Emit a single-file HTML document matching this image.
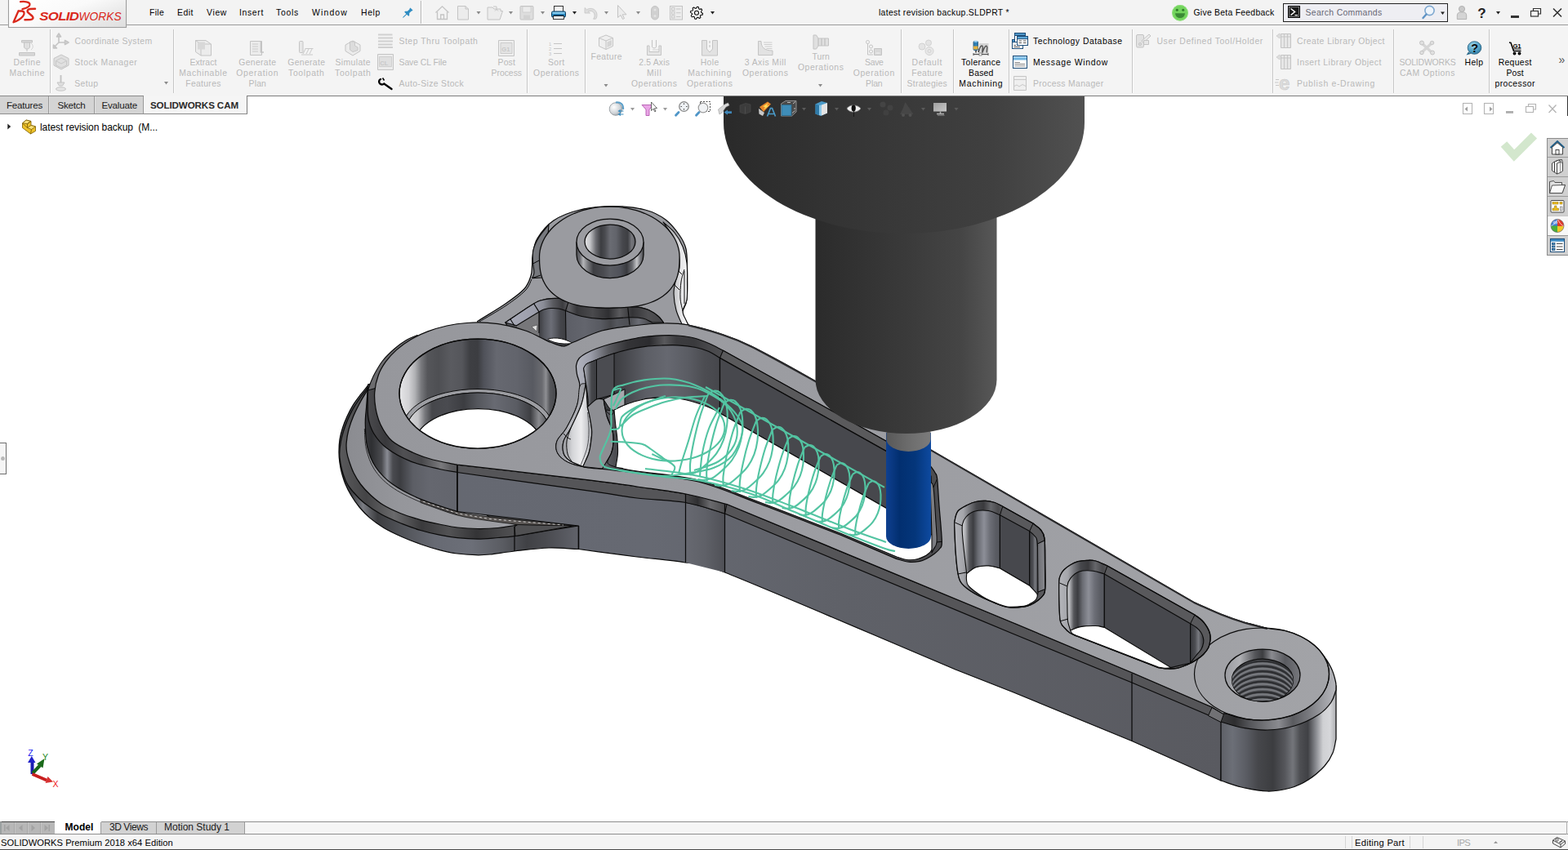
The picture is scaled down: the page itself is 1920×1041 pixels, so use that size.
<!DOCTYPE html>
<html lang="en"><head><meta charset="utf-8"><title>SOLIDWORKS Premium 2018 x64 Edition - latest revision backup.SLDPRT</title>
<style>
html,body{margin:0;padding:0;}
body{width:1920px;height:1041px;overflow:hidden;background:#fff;position:relative;font-family:"Liberation Sans",sans-serif;}
.t{position:absolute;white-space:pre;line-height:16px;height:16px;}
.r{position:absolute;}
svg{position:absolute;left:0;top:0;}
svg text{font-family:"Liberation Sans",sans-serif;}
</style></head><body>
<div id="app" style="position:absolute;left:0;top:0;width:1920px;height:1041px;overflow:hidden;">
<svg width="1920" height="1041" viewBox="0 0 1920 1041">
<defs><linearGradient id="gFlSide" x1="415" y1="0" x2="710" y2="0" gradientUnits="userSpaceOnUse"><stop offset="0" stop-color="#4a4b50"/><stop offset="0.05" stop-color="#3a3b3f"/><stop offset="0.1" stop-color="#7a7c82"/><stop offset="0.16" stop-color="#3c3d40"/><stop offset="0.25" stop-color="#4f5156"/><stop offset="0.4" stop-color="#676a73"/><stop offset="0.55" stop-color="#6c6f78"/><stop offset="0.68" stop-color="#5a5c62"/><stop offset="0.78" stop-color="#404145"/><stop offset="0.86" stop-color="#4a4b50"/><stop offset="1" stop-color="#62646c"/></linearGradient><linearGradient id="gFlCh" x1="415" y1="0" x2="640" y2="0" gradientUnits="userSpaceOnUse"><stop offset="0" stop-color="#5a5a5c"/><stop offset="0.15" stop-color="#444446"/><stop offset="0.3" stop-color="#6a6a6c"/><stop offset="0.45" stop-color="#3a3a3c"/><stop offset="0.6" stop-color="#525254"/><stop offset="0.75" stop-color="#343436"/><stop offset="0.9" stop-color="#4a4a4c"/><stop offset="1" stop-color="#555557"/></linearGradient><linearGradient id="gFlTop" x1="420" y1="0" x2="650" y2="0" gradientUnits="userSpaceOnUse"><stop offset="0" stop-color="#8a8b90"/><stop offset="0.3" stop-color="#95969b"/><stop offset="1" stop-color="#9fa0a5"/></linearGradient><linearGradient id="gHubWall" x1="447" y1="0" x2="560" y2="0" gradientUnits="userSpaceOnUse"><stop offset="0" stop-color="#3a3b3f"/><stop offset="0.07" stop-color="#2e2f32"/><stop offset="0.18" stop-color="#4a4b4f"/><stop offset="0.24" stop-color="#8a8c94"/><stop offset="0.3" stop-color="#4a4b50"/><stop offset="0.38" stop-color="#3c3d41"/><stop offset="0.52" stop-color="#5c5e65"/><stop offset="0.7" stop-color="#65676f"/><stop offset="1" stop-color="#63656d"/></linearGradient><linearGradient id="gHubCh" x1="450" y1="0" x2="560" y2="0" gradientUnits="userSpaceOnUse"><stop offset="0" stop-color="#4a4a4d"/><stop offset="0.2" stop-color="#39393c"/><stop offset="0.4" stop-color="#505053"/><stop offset="0.6" stop-color="#48484b"/><stop offset="0.82" stop-color="#7a7a7d"/><stop offset="0.92" stop-color="#606063"/><stop offset="1" stop-color="#555558"/></linearGradient><linearGradient id="gTop" x1="450" y1="0" x2="1640" y2="0" gradientUnits="userSpaceOnUse"><stop offset="0" stop-color="#96979c"/><stop offset="0.5" stop-color="#9c9da2"/><stop offset="1" stop-color="#a2a3a7"/></linearGradient><linearGradient id="gFront" x1="560" y1="0" x2="1500" y2="0" gradientUnits="userSpaceOnUse"><stop offset="0" stop-color="#656871"/><stop offset="0.25" stop-color="#666972"/><stop offset="0.5" stop-color="#5f6168"/><stop offset="1" stop-color="#595a60"/></linearGradient><linearGradient id="gHole" x1="489" y1="0" x2="681" y2="0" gradientUnits="userSpaceOnUse"><stop offset="0" stop-color="#e6e6e8"/><stop offset="0.06" stop-color="#d2d2d5"/><stop offset="0.1" stop-color="#b0b1b4"/><stop offset="0.14" stop-color="#77787c"/><stop offset="0.18" stop-color="#55565a"/><stop offset="0.25" stop-color="#4e4f53"/><stop offset="0.33" stop-color="#5a5b60"/><stop offset="0.4" stop-color="#55565b"/><stop offset="0.45" stop-color="#3e3f43"/><stop offset="0.5" stop-color="#3c3d41"/><stop offset="0.54" stop-color="#50525a"/><stop offset="0.62" stop-color="#666870"/><stop offset="0.75" stop-color="#62646c"/><stop offset="0.85" stop-color="#585a61"/><stop offset="0.91" stop-color="#6a6b70"/><stop offset="0.935" stop-color="#8d8e92"/><stop offset="0.96" stop-color="#55565a"/><stop offset="1" stop-color="#46474b"/></linearGradient><linearGradient id="gEnd" x1="1495" y1="0" x2="1637" y2="0" gradientUnits="userSpaceOnUse"><stop offset="0" stop-color="#5e6067"/><stop offset="0.1" stop-color="#6c6f77"/><stop offset="0.22" stop-color="#5a5c63"/><stop offset="0.32" stop-color="#46474b"/><stop offset="0.45" stop-color="#3c3d40"/><stop offset="0.55" stop-color="#55565b"/><stop offset="0.62" stop-color="#74767b"/><stop offset="0.68" stop-color="#4e4f53"/><stop offset="0.75" stop-color="#404145"/><stop offset="0.82" stop-color="#8a8c91"/><stop offset="0.88" stop-color="#cfd0d3"/><stop offset="0.94" stop-color="#d6d7da"/><stop offset="1" stop-color="#a9aaad"/></linearGradient><linearGradient id="gEndCh" x1="1495" y1="0" x2="1637" y2="0" gradientUnits="userSpaceOnUse"><stop offset="0" stop-color="#3a3a3c"/><stop offset="0.12" stop-color="#2e2e30"/><stop offset="0.25" stop-color="#55565a"/><stop offset="0.4" stop-color="#77787c"/><stop offset="0.5" stop-color="#8a8b90"/><stop offset="0.62" stop-color="#5a5b5f"/><stop offset="0.75" stop-color="#77787d"/><stop offset="0.88" stop-color="#9c9da2"/><stop offset="1" stop-color="#b9babf"/></linearGradient><linearGradient id="gHubCr" x1="450" y1="0" x2="556" y2="0" gradientUnits="userSpaceOnUse"><stop offset="0" stop-color="#4a4a4d"/><stop offset="0.3" stop-color="#3a3a3d"/><stop offset="0.6" stop-color="#5c5c5f"/><stop offset="1" stop-color="#77777a"/></linearGradient><linearGradient id="gCorner" x1="839" y1="0" x2="888" y2="0" gradientUnits="userSpaceOnUse"><stop offset="0" stop-color="#676971"/><stop offset="0.5" stop-color="#5f6168"/><stop offset="1" stop-color="#4f5056"/></linearGradient><linearGradient id="gCh2" x1="839" y1="0" x2="890" y2="0" gradientUnits="userSpaceOnUse"><stop offset="0" stop-color="#4a4a4c"/><stop offset="0.3" stop-color="#2f2f31"/><stop offset="0.6" stop-color="#6a6a6d"/><stop offset="1" stop-color="#4a4a4c"/></linearGradient><linearGradient id="gBossSideL" x1="652" y1="0" x2="664" y2="0" gradientUnits="userSpaceOnUse"><stop offset="0" stop-color="#77797e"/><stop offset="1" stop-color="#8a8b90"/></linearGradient><linearGradient id="gBossR" x1="824" y1="0" x2="842" y2="0" gradientUnits="userSpaceOnUse"><stop offset="0" stop-color="#b9babd"/><stop offset="0.5" stop-color="#e4e4e6"/><stop offset="1" stop-color="#f4f4f5"/></linearGradient><linearGradient id="gPk1" x1="660" y1="0" x2="693" y2="0" gradientUnits="userSpaceOnUse"><stop offset="0" stop-color="#3c3d41"/><stop offset="0.2" stop-color="#55575e"/><stop offset="0.45" stop-color="#6c6e77"/><stop offset="0.62" stop-color="#5a5c63"/><stop offset="0.8" stop-color="#44454a"/><stop offset="1" stop-color="#3e3f43"/></linearGradient><linearGradient id="gPk1b" x1="693" y1="0" x2="771" y2="0" gradientUnits="userSpaceOnUse"><stop offset="0" stop-color="#5c5e66"/><stop offset="0.3" stop-color="#63656d"/><stop offset="0.55" stop-color="#585a61"/><stop offset="0.7" stop-color="#46474b"/><stop offset="0.8" stop-color="#55575d"/><stop offset="1" stop-color="#4c4d52"/></linearGradient><linearGradient id="gPk1r" x1="770" y1="0" x2="800" y2="0" gradientUnits="userSpaceOnUse"><stop offset="0" stop-color="#4a4b50"/><stop offset="0.4" stop-color="#6a6c74"/><stop offset="0.7" stop-color="#55565b"/><stop offset="1" stop-color="#3c3d40"/></linearGradient><linearGradient id="gPk1c" x1="619" y1="0" x2="813" y2="0" gradientUnits="userSpaceOnUse"><stop offset="0" stop-color="#a9abb8"/><stop offset="0.18" stop-color="#9c9eab"/><stop offset="0.24" stop-color="#8a8c96"/><stop offset="0.3" stop-color="#5a5b60"/><stop offset="0.36" stop-color="#3c3c3f"/><stop offset="0.4" stop-color="#606064"/><stop offset="0.45" stop-color="#38383b"/><stop offset="0.55" stop-color="#4a4a4d"/><stop offset="0.65" stop-color="#2f2f32"/><stop offset="0.72" stop-color="#5a5a5d"/><stop offset="0.8" stop-color="#343437"/><stop offset="0.9" stop-color="#505053"/><stop offset="1" stop-color="#454548"/></linearGradient><linearGradient id="gRing" x1="706" y1="0" x2="788" y2="0" gradientUnits="userSpaceOnUse"><stop offset="0" stop-color="#55565a"/><stop offset="0.05" stop-color="#6a6b70"/><stop offset="0.1" stop-color="#b5b6b9"/><stop offset="0.17" stop-color="#77787c"/><stop offset="0.25" stop-color="#3e3f43"/><stop offset="0.4" stop-color="#4a4b50"/><stop offset="0.5" stop-color="#5a5c62"/><stop offset="0.65" stop-color="#50525a"/><stop offset="0.75" stop-color="#3a3b3f"/><stop offset="0.83" stop-color="#6a6b70"/><stop offset="0.9" stop-color="#c4c5c8"/><stop offset="0.95" stop-color="#7a7b80"/><stop offset="1" stop-color="#4a4b4f"/></linearGradient><linearGradient id="gRingIn" x1="716" y1="0" x2="778" y2="0" gradientUnits="userSpaceOnUse"><stop offset="0" stop-color="#e2e2e4"/><stop offset="0.1" stop-color="#c8c9cc"/><stop offset="0.22" stop-color="#6a6b70"/><stop offset="0.32" stop-color="#3c3d41"/><stop offset="0.4" stop-color="#4a4b50"/><stop offset="0.5" stop-color="#6a6c73"/><stop offset="0.62" stop-color="#62646b"/><stop offset="0.75" stop-color="#46474c"/><stop offset="0.85" stop-color="#3e3f43"/><stop offset="0.93" stop-color="#77787d"/><stop offset="1" stop-color="#5a5b60"/></linearGradient><linearGradient id="gHole2" x1="500" y1="0" x2="670" y2="0" gradientUnits="userSpaceOnUse"><stop offset="0" stop-color="#d8d8da"/><stop offset="0.07" stop-color="#c4c4c7"/><stop offset="0.12" stop-color="#77787c"/><stop offset="0.17" stop-color="#46474b"/><stop offset="0.28" stop-color="#4a4b50"/><stop offset="0.4" stop-color="#3c3d41"/><stop offset="0.5" stop-color="#55575d"/><stop offset="0.62" stop-color="#686a72"/><stop offset="0.78" stop-color="#5a5c63"/><stop offset="0.88" stop-color="#3e3f43"/><stop offset="0.94" stop-color="#8a8b8f"/><stop offset="1" stop-color="#55565a"/></linearGradient><linearGradient id="gCs" x1="1500" y1="0" x2="1592" y2="0" gradientUnits="userSpaceOnUse"><stop offset="0" stop-color="#9a9ba0"/><stop offset="0.2" stop-color="#b0b1b5"/><stop offset="0.4" stop-color="#55565a"/><stop offset="0.5" stop-color="#3c3d40"/><stop offset="0.62" stop-color="#8a8b90"/><stop offset="0.8" stop-color="#5a5b60"/><stop offset="1" stop-color="#77787d"/></linearGradient><linearGradient id="gTh" x1="1509" y1="0" x2="1584" y2="0" gradientUnits="userSpaceOnUse"><stop offset="0" stop-color="#55565b"/><stop offset="0.5" stop-color="#5c5d62"/><stop offset="1" stop-color="#3e3f43"/></linearGradient><linearGradient id="gPkCh" x1="705" y1="0" x2="886" y2="0" gradientUnits="userSpaceOnUse"><stop offset="0" stop-color="#b4b6c0"/><stop offset="0.1" stop-color="#9c9eaa"/><stop offset="0.22" stop-color="#5a5b60"/><stop offset="0.35" stop-color="#343437"/><stop offset="0.5" stop-color="#2c2c2f"/><stop offset="0.6" stop-color="#59595c"/><stop offset="0.68" stop-color="#3c3c3f"/><stop offset="0.8" stop-color="#3a3a3d"/><stop offset="0.9" stop-color="#48484b"/><stop offset="1" stop-color="#4d4d50"/></linearGradient><linearGradient id="gPkLc" x1="682" y1="0" x2="715" y2="0" gradientUnits="userSpaceOnUse"><stop offset="0" stop-color="#8e8f95"/><stop offset="0.5" stop-color="#b9bac0"/><stop offset="1" stop-color="#9a9ba1"/></linearGradient><linearGradient id="gPkBackL" x1="714" y1="0" x2="731" y2="0" gradientUnits="userSpaceOnUse"><stop offset="0" stop-color="#c4c6d0"/><stop offset="0.25" stop-color="#8a8c94"/><stop offset="0.6" stop-color="#45464a"/><stop offset="1" stop-color="#3a3b3f"/></linearGradient><linearGradient id="gPkBack" x1="752" y1="0" x2="882" y2="0" gradientUnits="userSpaceOnUse"><stop offset="0" stop-color="#3c3d41"/><stop offset="0.1" stop-color="#46474c"/><stop offset="0.3" stop-color="#5c5e65"/><stop offset="0.5" stop-color="#666870"/><stop offset="0.7" stop-color="#5a5c63"/><stop offset="0.85" stop-color="#4c4d52"/><stop offset="1" stop-color="#46474c"/></linearGradient><linearGradient id="gPkL" x1="690" y1="0" x2="726" y2="0" gradientUnits="userSpaceOnUse"><stop offset="0" stop-color="#9a9ba0"/><stop offset="0.3" stop-color="#d4d5d8"/><stop offset="0.6" stop-color="#ececee"/><stop offset="0.85" stop-color="#c4c5c9"/><stop offset="1" stop-color="#8d8e93"/></linearGradient><linearGradient id="gPkR" x1="1139" y1="0" x2="1148" y2="0" gradientUnits="userSpaceOnUse"><stop offset="0" stop-color="#8a8b90"/><stop offset="0.5" stop-color="#77787d"/><stop offset="1" stop-color="#9a9ba0"/></linearGradient><linearGradient id="gS1c" x1="1169" y1="0" x2="1178" y2="0" gradientUnits="userSpaceOnUse"><stop offset="0" stop-color="#b9babf"/><stop offset="0.6" stop-color="#a9aaaf"/><stop offset="1" stop-color="#9a9ba0"/></linearGradient><linearGradient id="gS1o" x1="1169" y1="0" x2="1228" y2="0" gradientUnits="userSpaceOnUse"><stop offset="0" stop-color="#b4b5ba"/><stop offset="0.18" stop-color="#a4a5aa"/><stop offset="0.3" stop-color="#77787d"/><stop offset="0.45" stop-color="#46474b"/><stop offset="0.6" stop-color="#3a3a3d"/><stop offset="0.75" stop-color="#66676b"/><stop offset="0.9" stop-color="#4a4a4d"/><stop offset="1" stop-color="#59595c"/></linearGradient><linearGradient id="gS1w" x1="1178" y1="0" x2="1227" y2="0" gradientUnits="userSpaceOnUse"><stop offset="0" stop-color="#d4d5d8"/><stop offset="0.08" stop-color="#b0b1b5"/><stop offset="0.18" stop-color="#55565a"/><stop offset="0.28" stop-color="#3c3d41"/><stop offset="0.4" stop-color="#6a6c73"/><stop offset="0.55" stop-color="#8d8f98"/><stop offset="0.7" stop-color="#6c6e76"/><stop offset="0.85" stop-color="#595b62"/><stop offset="1" stop-color="#55575d"/></linearGradient><linearGradient id="gS1r" x1="1260.7" y1="0" x2="1272" y2="0" gradientUnits="userSpaceOnUse"><stop offset="0" stop-color="#3a3b3f"/><stop offset="0.35" stop-color="#4c4d52"/><stop offset="0.6" stop-color="#77797f"/><stop offset="0.8" stop-color="#55565b"/><stop offset="1" stop-color="#3c3d41"/></linearGradient><linearGradient id="gS1rs" x1="1270" y1="0" x2="1280" y2="0" gradientUnits="userSpaceOnUse"><stop offset="0" stop-color="#6a6b70"/><stop offset="1" stop-color="#8a8b90"/></linearGradient><linearGradient id="gS2c" x1="1297" y1="0" x2="1306" y2="0" gradientUnits="userSpaceOnUse"><stop offset="0" stop-color="#b9babf"/><stop offset="0.6" stop-color="#a9aaaf"/><stop offset="1" stop-color="#9a9ba0"/></linearGradient><linearGradient id="gS2o" x1="1297" y1="0" x2="1356" y2="0" gradientUnits="userSpaceOnUse"><stop offset="0" stop-color="#b4b5ba"/><stop offset="0.18" stop-color="#a4a5aa"/><stop offset="0.3" stop-color="#77787d"/><stop offset="0.45" stop-color="#46474b"/><stop offset="0.6" stop-color="#3a3a3d"/><stop offset="0.75" stop-color="#66676b"/><stop offset="0.9" stop-color="#4a4a4d"/><stop offset="1" stop-color="#59595c"/></linearGradient><linearGradient id="gS2w" x1="1306" y1="0" x2="1355" y2="0" gradientUnits="userSpaceOnUse"><stop offset="0" stop-color="#d4d5d8"/><stop offset="0.08" stop-color="#b0b1b5"/><stop offset="0.18" stop-color="#55565a"/><stop offset="0.28" stop-color="#3c3d41"/><stop offset="0.4" stop-color="#6a6c73"/><stop offset="0.55" stop-color="#8d8f98"/><stop offset="0.7" stop-color="#6c6e76"/><stop offset="0.85" stop-color="#595b62"/><stop offset="1" stop-color="#55575d"/></linearGradient><linearGradient id="gS2r" x1="1457.6" y1="0" x2="1474" y2="0" gradientUnits="userSpaceOnUse"><stop offset="0" stop-color="#3a3b3f"/><stop offset="0.35" stop-color="#4c4d52"/><stop offset="0.6" stop-color="#77797f"/><stop offset="0.8" stop-color="#55565b"/><stop offset="1" stop-color="#3c3d41"/></linearGradient><linearGradient id="gHold" x1="886" y1="0" x2="1328" y2="0" gradientUnits="userSpaceOnUse"><stop offset="0" stop-color="#2a2a2a"/><stop offset="0.45" stop-color="#383838"/><stop offset="0.75" stop-color="#404040"/><stop offset="1" stop-color="#515151"/></linearGradient><linearGradient id="gShank" x1="998" y1="0" x2="1221" y2="0" gradientUnits="userSpaceOnUse"><stop offset="0" stop-color="#2b2b2b"/><stop offset="0.5" stop-color="#3a3a3a"/><stop offset="0.8" stop-color="#454545"/><stop offset="1" stop-color="#585858"/></linearGradient><linearGradient id="gCol" x1="1085" y1="0" x2="1140" y2="0" gradientUnits="userSpaceOnUse"><stop offset="0" stop-color="#585858"/><stop offset="0.5" stop-color="#6c6c6c"/><stop offset="1" stop-color="#7c7c7c"/></linearGradient><linearGradient id="gBlue" x1="1085" y1="0" x2="1140" y2="0" gradientUnits="userSpaceOnUse"><stop offset="0" stop-color="#0f4090"/><stop offset="0.3" stop-color="#022f70"/><stop offset="0.65" stop-color="#04367b"/><stop offset="1" stop-color="#0e4aa0"/></linearGradient></defs>
<path d="M450.7 472.0C447.5 476.0 444.1 480.0 441.0 484.0C437.9 488.0 435.0 491.7 432.3 496.0C429.6 500.3 427.1 505.4 425.0 510.0C422.9 514.6 421.1 519.1 419.6 523.8C418.1 528.5 416.8 533.0 416.0 538.0C415.2 543.0 415.0 548.9 415.0 553.7C415.0 558.5 415.4 562.8 416.0 567.0C416.6 571.2 417.2 574.7 418.4 579.0C419.6 583.3 421.1 588.4 423.0 593.0C424.9 597.6 427.2 602.1 430.0 606.8C432.8 611.5 436.2 616.4 440.0 621.0C443.8 625.6 448.0 630.1 453.0 634.4C458.0 638.6 463.5 642.6 470.0 646.5C476.5 650.4 484.7 654.2 492.2 657.5C499.7 660.8 507.3 663.8 515.0 666.5C522.7 669.2 530.8 671.7 538.3 673.6C545.8 675.5 552.6 677.0 560.0 678.0C567.4 679.0 575.8 679.5 582.5 679.7C589.2 679.9 592.1 679.8 600.0 679.0C607.9 678.2 618.0 676.3 630.0 675.0C642.0 673.7 658.9 671.4 672.0 671.0C685.1 670.6 696.3 672.0 708.5 672.5L708.5 640.0L560.0 600.0L470.0 500.0L450.7 472.0Z" fill="url(#gFlSide)" stroke="#0a0a0a" stroke-width="1.25" stroke-linejoin="round" />
<path d="M451.0 474.0C447.7 478.3 444.3 482.2 441.0 487.0C437.7 491.8 434.0 497.3 431.0 503.0C428.0 508.7 425.2 514.8 423.0 521.0C420.8 527.2 418.7 533.4 417.5 540.0C416.3 546.6 415.1 552.7 416.0 560.7C416.9 568.8 420.2 581.2 423.0 588.3C425.8 595.3 429.2 598.4 433.0 603.0C436.8 607.6 440.3 611.5 446.0 616.0C451.7 620.5 459.3 625.8 467.0 630.0C474.7 634.2 484.2 638.1 492.2 641.4C500.2 644.6 507.3 647.2 515.0 649.5C522.7 651.8 530.8 653.7 538.3 655.2C545.8 656.7 552.2 657.8 560.0 658.6C567.8 659.4 576.7 660.0 585.0 660.0C593.3 660.0 602.5 659.0 610.0 658.5C617.5 658.0 620.0 658.1 630.0 656.7C640.0 655.3 657.0 652.1 670.0 650.0C683.0 647.9 695.3 646.0 708.0 644.0L560.0 600.0L470.0 500.0L451.0 474.0Z" fill="url(#gFlCh)" stroke="#0a0a0a" stroke-width="1.25" stroke-linejoin="round" />
<path d="M451.0 476.0C448.0 481.0 445.0 485.5 442.0 491.0C439.0 496.5 435.5 503.2 433.0 509.0C430.5 514.8 428.5 520.5 427.0 526.0C425.5 531.5 424.6 537.5 424.2 542.2C423.8 546.9 424.1 550.1 424.7 554.0C425.3 557.9 426.3 561.1 427.7 565.3C429.1 569.5 430.7 574.4 433.0 579.0C435.3 583.6 438.0 588.4 441.5 593.0C445.0 597.6 449.4 602.3 454.0 606.5C458.6 610.7 463.0 614.6 469.0 618.3C475.0 622.0 482.3 625.4 490.0 628.5C497.7 631.6 507.3 634.5 515.3 636.8C523.3 639.0 530.5 640.5 538.0 642.0C545.5 643.5 552.2 645.1 560.0 646.0C567.8 646.9 576.7 647.4 585.0 647.5C593.3 647.6 601.8 647.2 610.0 646.5C618.2 645.8 626.0 644.2 634.0 643.0L600.0 634.0L560.0 600.0L470.0 500.0L451.0 476.0Z" fill="url(#gFlTop)" stroke="#0a0a0a" stroke-width="1.25" stroke-linejoin="round" />
<path d="M630 645 L634 642.5 L703 643.7 L642 654.5 L631 656.5 Z" fill="#505052" stroke="#0a0a0a" stroke-width="1.0" stroke-linejoin="round" />
<path d="M515.0 611.4C530.0 616.4 545.8 622.9 560.0 626.5C574.2 630.1 576.2 630.1 600.0 633.0C623.8 635.9 668.7 640.1 703.0 643.7L634.0 642.5C622.7 641.0 612.3 639.9 600.0 638.0C587.7 636.1 574.2 634.8 560.0 631.0C545.8 627.2 530.0 620.7 515.0 615.5L515.0 611.4Z" fill="#5a5654" stroke="#0a0a0a" stroke-width="0.7" stroke-linejoin="round" />
<path d="M518 614 L560 628.8 L600 635.6 L690 643" fill="none" stroke="#d8d8d8" stroke-width="0.9" stroke-linejoin="round" stroke-dasharray="3 3"/>
<path d="M630 645 L630 675" fill="none" stroke="#0a0a0a" stroke-width="1.25" stroke-linejoin="round" />
<path d="M450.7 471.0C450.0 480.7 449.1 492.0 448.5 500.0C447.9 508.0 447.1 511.2 447.3 519.0C447.5 526.8 447.5 538.0 449.6 546.8C451.7 555.6 454.8 564.3 460.0 572.0C465.2 579.7 471.5 586.4 480.7 593.0C489.9 599.6 502.1 605.8 515.3 611.4C528.5 617.0 545.1 621.5 560.0 626.5L560.0 575.0L500.0 520.0L470.0 470.0L450.7 471.0Z" fill="url(#gHubWall)" stroke="#0a0a0a" stroke-width="1.25" stroke-linejoin="round" />
<path d="M446.3 525.0C446.7 529.2 446.5 541.7 448.5 550.0C450.5 558.3 453.4 567.3 458.5 575.0C463.6 582.7 469.8 589.4 479.0 596.0C488.2 602.6 500.5 608.8 514.0 614.5C527.5 620.2 552.3 627.4 560.0 630.0" fill="none" stroke="#2a2a2c" stroke-width="1.0" stroke-linejoin="round" />
<path d="M450.6 471.0C450.6 484.0 449.5 500.1 450.7 510.0C451.9 520.0 453.8 524.2 457.6 530.7C461.5 537.2 466.1 543.2 473.8 549.0C481.5 554.8 492.9 561.0 503.7 565.3C514.4 569.5 528.9 572.3 538.3 574.5C547.7 576.7 552.8 577.2 560.0 578.5L560.0 565.0L500.0 520.0L470.0 465.0L450.6 471.0Z" fill="url(#gHubCh)" stroke="#0a0a0a" stroke-width="1.25" stroke-linejoin="round" />
<path d="M450.6 478.0C451.7 474.7 452.6 471.5 454.0 468.0C455.4 464.5 456.7 461.2 459.2 456.8C461.7 452.4 464.8 446.5 468.8 441.5C472.8 436.5 478.4 431.2 483.2 427.0C488.0 422.8 493.0 419.2 497.6 416.5C502.2 413.8 506.5 412.5 511.0 410.5L520.0 430.0L480.0 470.0L450.6 478.0Z" fill="#6c6c6f" stroke="#0a0a0a" stroke-width="1.1" stroke-linejoin="round" />
<path d="M560.0 575.0C615.0 581.7 688.3 590.3 725.0 595.0C761.7 599.7 760.8 600.5 780.0 603.0C799.2 605.5 821.8 606.7 840.0 610.0C858.2 613.3 872.7 618.7 889.0 623.0L1240.0 770.0L1388.0 830.0L1496.0 878.0L1495.0 956.0L1386.0 907.5L1240.0 847.5L1170.0 820.0C1075.8 780.3 942.7 722.8 887.5 701.0C832.3 679.2 856.9 692.2 839.0 689.0C821.1 685.8 801.8 684.8 780.0 682.0C758.2 679.2 732.3 675.7 708.5 672.5L708.5 644.0L560.0 626.5L560.0 575.0Z" fill="url(#gFront)" stroke="#0a0a0a" stroke-width="1.25" stroke-linejoin="round" />
<path d="M839.5 615.0L887.5 629.0L887.5 701.0L839.5 689.0L839.5 615.0Z" fill="url(#gCorner)" />
<path d="M560.0 569.2C615.0 575.6 688.3 583.8 725.0 588.3C761.7 592.8 760.8 593.2 780.0 596.0C799.2 598.8 821.7 601.4 840.0 605.0C858.3 608.6 873.3 613.3 890.0 617.5L1240.0 762.5L1389.0 825.0L1484.0 866.0L1497.0 874.0L1495.0 884.0L1480.0 876.0L1386.0 836.0L1240.0 776.0L887.5 629.0C871.7 624.5 857.9 618.7 840.0 615.5C822.1 612.3 799.2 612.3 780.0 610.0C760.8 607.7 761.7 607.0 725.0 601.7C688.3 596.5 615.0 586.2 560.0 578.5L560.0 569.2Z" fill="#555558" stroke="#0a0a0a" stroke-width="1.25" stroke-linejoin="round" />
<path d="M839.5 605.0C848.0 606.7 856.6 607.9 865.0 610.0C873.4 612.1 881.7 615.0 890.0 617.5L887.5 629.0C879.0 626.3 870.0 623.2 862.0 621.0C854.0 618.8 847.0 617.3 839.5 615.5L839.5 605.0Z" fill="url(#gCh2)" stroke="#0a0a0a" stroke-width="1.0" stroke-linejoin="round" />
<path d="M560 569L560 627" fill="none" stroke="#0a0a0a" stroke-width="1.25" stroke-linejoin="round" />
<path d="M708.5 644L708.5 672.5" fill="none" stroke="#0a0a0a" stroke-width="1.25" stroke-linejoin="round" />
<path d="M839.5 605L839.5 689" fill="none" stroke="#0a0a0a" stroke-width="1.25" stroke-linejoin="round" />
<path d="M887.5 617.5L887.5 701" fill="none" stroke="#0a0a0a" stroke-width="1.25" stroke-linejoin="round" />
<path d="M1386 825L1386 907.5" fill="none" stroke="#0a0a0a" stroke-width="1.25" stroke-linejoin="round" />
<path d="M1495.0 878.0L1495.0 956.0C1503.3 958.7 1510.5 961.8 1520.0 964.0C1529.5 966.2 1542.0 968.8 1552.0 969.0C1562.0 969.2 1571.7 967.3 1580.0 965.0C1588.3 962.7 1595.0 959.5 1602.0 955.0C1609.0 950.5 1617.0 943.5 1622.0 938.0C1627.0 932.5 1629.7 927.5 1632.0 922.0C1634.3 916.5 1634.7 910.7 1636.0 905.0L1636.0 840.0L1600.0 800.0L1495.0 878.0Z" fill="url(#gEnd)" stroke="#0a0a0a" stroke-width="1.25" stroke-linejoin="round" />
<path d="M1495.0 874.0L1495.0 884.0C1503.3 886.3 1510.5 889.3 1520.0 891.0C1529.5 892.7 1541.2 894.3 1552.0 894.0C1562.8 893.7 1574.5 892.2 1585.0 889.0C1595.5 885.8 1607.5 879.8 1615.0 875.0C1622.5 870.2 1626.5 865.0 1630.0 860.0C1633.5 855.0 1634.0 850.0 1636.0 845.0C1635.8 841.7 1636.5 839.5 1635.5 835.0C1634.5 830.5 1632.9 823.8 1630.0 818.0C1627.1 812.2 1622.7 805.1 1618.0 800.0C1613.3 794.9 1608.3 791.3 1602.0 787.5C1595.7 783.7 1588.3 780.0 1580.0 777.0C1571.7 774.0 1561.2 771.9 1552.0 769.5C1542.8 767.1 1534.0 764.8 1525.0 762.5L1500.0 800.0L1495.0 874.0Z" fill="url(#gEndCh)" stroke="#0a0a0a" stroke-width="1.25" stroke-linejoin="round" />
<path d="M1484.0 866.5L1498.5 874.5L1495.0 884.5L1479.5 876.5L1484.0 866.5Z" fill="#717174" stroke="#0a0a0a" stroke-width="1.0" stroke-linejoin="round" />
<path d="M584.7 393.5C596.1 386.3 609.5 378.6 619.0 372.0C628.5 365.4 636.6 359.7 641.8 354.0C647.0 348.3 648.4 342.8 650.0 338.0C651.6 333.2 651.2 329.4 651.6 325.0C652.0 320.6 651.3 317.3 652.4 311.8C653.5 306.3 653.7 299.0 658.0 292.0C662.3 285.0 669.3 275.8 678.0 270.0C686.7 264.2 698.0 259.9 710.0 257.0C722.0 254.1 736.7 252.5 750.0 252.5C763.3 252.5 779.2 254.2 790.0 257.0C800.8 259.8 808.0 263.8 815.0 269.0C822.0 274.2 827.8 282.0 832.0 288.0C836.2 294.0 838.4 298.0 840.0 305.0C841.6 312.0 841.3 319.7 841.5 330.0C841.7 340.3 841.9 358.5 841.0 367.0C840.1 375.5 836.5 377.2 836.0 381.0C835.5 384.8 836.8 387.2 838.0 390.0C839.2 392.8 841.3 395.3 843.0 398.0L843.0 430.0L600.0 430.0L584.7 393.5Z" fill="#9a9ba0" stroke="#0a0a0a" stroke-width="1.25" stroke-linejoin="round" />
<path d="M812.0 272.0C816.7 276.3 822.0 280.0 826.0 285.0C830.0 290.0 833.5 295.8 836.0 302.0C838.5 308.2 840.1 314.8 841.0 322.0C841.9 329.2 841.5 337.5 841.5 345.0C841.5 352.5 841.9 361.0 841.0 367.0C840.1 373.0 836.2 376.8 836.0 381.0C835.8 385.2 838.8 389.2 840.0 392.0C841.2 394.8 842.0 396.0 843.0 398.0L835.0 397.0C832.7 391.3 829.7 386.2 828.0 380.0C826.3 373.8 825.2 365.8 825.0 360.0C824.8 354.2 825.8 350.3 827.0 345.0C828.2 339.7 831.3 333.8 832.0 328.0C832.7 322.2 832.3 316.3 831.0 310.0C829.7 303.7 827.2 296.3 824.0 290.0C820.8 283.7 816.0 278.0 812.0 272.0Z" fill="url(#gBossR)" stroke="#0a0a0a" stroke-width="1.1" stroke-linejoin="round" />
<path d="M836.0 381.0C835.5 378.3 833.3 371.0 833.0 365.0C832.7 359.0 833.2 350.8 834.0 345.0C834.8 339.2 837.3 332.5 838.0 330.0" fill="none" stroke="#0a0a0a" stroke-width="1.0" stroke-linejoin="round" />
<path d="M838 332 L838 372" fill="none" stroke="#0a0a0a" stroke-width="1.0" stroke-linejoin="round" />
<path d="M827 328 L835 336 M825 348 L832 355" fill="none" stroke="#0a0a0a" stroke-width="1.0" stroke-linejoin="round" />
<path d="M672.0 275.0C668.0 280.2 663.2 285.3 660.0 290.5C656.8 295.7 654.2 301.1 653.0 306.0C651.8 310.9 652.3 315.3 652.5 320.0C652.7 324.7 654.1 330.6 654.0 334.0C653.9 337.4 652.4 338.4 651.6 340.6L664.0 340.0L670.0 300.0L672.0 275.0Z" fill="#77797e" stroke="#0a0a0a" stroke-width="1.1" stroke-linejoin="round" />
<path d="M587.0 394.0C592.5 390.7 610.7 380.3 620.0 374.0C629.3 367.7 637.8 361.3 643.0 356.0C648.2 350.7 649.7 344.3 651.0 342.0" fill="none" stroke="#0a0a0a" stroke-width="1.0" stroke-linejoin="round" />
<path d="M652.5 323 L662 318 M652 340.5 L662 337" fill="none" stroke="#0a0a0a" stroke-width="1.0" stroke-linejoin="round" />
<path d="M618.8 395.0C630.4 387.3 646.2 376.5 653.8 371.9C661.3 367.3 660.5 368.6 664.0 367.5C667.5 366.4 671.1 365.9 675.0 365.6C678.9 365.3 684.0 365.0 687.5 365.6C691.0 366.2 690.0 367.6 696.2 369.4C702.5 371.2 716.0 375.0 725.0 376.2C734.0 377.5 742.7 377.0 750.0 376.9C757.3 376.8 763.5 375.7 768.8 375.6C774.0 375.5 776.9 375.5 781.2 376.2C785.6 377.0 790.8 378.1 795.0 380.0C799.2 381.9 803.3 385.0 806.2 387.5C809.2 390.0 810.4 392.5 812.5 395.0L812.0 420.0L640.0 430.0L618.8 395.0Z" fill="#55565a" stroke="#0a0a0a" stroke-width="1.25" stroke-linejoin="round" />
<path d="M632.5 398.8L660.0 381.9L660.0 425.0L640.0 425.0L632.5 398.8Z" fill="#77777a" />
<path d="M660.0 381.9C662.7 380.8 665.5 379.2 668.0 378.5C670.5 377.8 672.3 377.6 675.0 377.5C677.7 377.4 681.1 377.5 684.0 378.0C686.9 378.5 689.7 379.7 692.5 380.6L693.0 425.0L660.0 425.0L660.0 381.9Z" fill="url(#gPk1)" />
<path d="M692.5 380.6C699.2 382.9 705.0 385.8 712.5 387.5C720.0 389.2 727.9 390.4 737.5 390.6C747.1 390.8 759.2 389.4 770.0 388.8L771.0 425.0L693.0 425.0L692.5 380.6Z" fill="url(#gPk1b)" />
<path d="M770.0 388.8C775.8 389.2 782.7 389.0 787.5 390.0C792.3 391.0 795.0 393.3 798.8 395.0L798.0 420.0L771.0 420.0L770.0 388.8Z" fill="url(#gPk1r)" />
<path d="M618.8 395.0C630.4 387.3 646.2 376.5 653.8 371.9C661.3 367.3 660.5 368.6 664.0 367.5C667.5 366.4 671.1 365.9 675.0 365.6C678.9 365.3 684.0 365.0 687.5 365.6C691.0 366.2 690.0 367.6 696.2 369.4C702.5 371.2 716.0 375.0 725.0 376.2C734.0 377.5 742.7 377.0 750.0 376.9C757.3 376.8 763.5 375.7 768.8 375.6C774.0 375.5 776.9 375.5 781.2 376.2C785.6 377.0 790.8 378.1 795.0 380.0C799.2 381.9 803.3 385.0 806.2 387.5C809.2 390.0 810.4 392.5 812.5 395.0L798.8 395.0C795.0 393.3 792.3 391.0 787.5 390.0C782.7 389.0 778.3 388.6 770.0 388.8C761.7 388.9 747.1 390.8 737.5 390.6C727.9 390.4 720.0 389.2 712.5 387.5C705.0 385.8 697.2 382.2 692.5 380.6C687.8 379.0 686.9 378.5 684.0 378.0C681.1 377.5 677.7 377.4 675.0 377.5C672.3 377.6 670.5 377.8 668.0 378.5C665.5 379.2 665.9 378.5 660.0 381.9C654.1 385.3 641.7 393.1 632.5 398.8L618.8 395.0Z" fill="url(#gPk1c)" stroke="#0a0a0a" stroke-width="1.1" stroke-linejoin="round" />
<path d="M692.5 380.6 L693 416 M770 388.7 L771 398 M696.2 369.4 L692.5 380.6 M768.7 375.6 L770 388.7 M653.7 371.9 L660 381.9 L660 408 M625 391 L630 399" fill="none" stroke="#0a0a0a" stroke-width="1.1" stroke-linejoin="round" />
<path d="M651 400 L658 398 L657 406 Z" fill="#ddd" stroke="#333" stroke-width="0.5" stroke-linejoin="round" />
<path d="M832.1 315.0C832.1 318.5 831.9 324.3 831.5 327.9C831.2 331.6 830.6 334.1 829.8 336.9C829.1 339.7 828.2 342.2 827.0 344.6C825.9 347.0 824.6 349.3 823.1 351.4C821.6 353.5 820.0 355.5 818.1 357.3C816.3 359.2 814.2 360.9 812.0 362.5C809.8 364.1 807.4 365.6 804.9 366.9C802.3 368.2 799.6 369.4 796.6 370.5C793.7 371.6 790.6 372.5 787.3 373.3C783.9 374.1 780.5 374.8 776.6 375.4C772.8 375.9 769.3 376.3 764.2 376.6C759.2 376.9 752.3 377.0 746.3 377.0C740.3 377.0 733.4 376.9 728.4 376.6C723.3 376.3 719.8 375.9 716.0 375.4C712.1 374.8 708.7 374.1 705.3 373.3C702.0 372.5 698.9 371.6 696.0 370.5C693.0 369.4 690.3 368.2 687.7 366.9C685.2 365.6 682.8 364.1 680.6 362.5C678.4 360.9 676.3 359.2 674.5 357.3C672.6 355.5 671.0 353.5 669.5 351.4C668.0 349.3 666.7 347.0 665.6 344.6C664.4 342.2 663.5 339.7 662.8 336.9C662.0 334.1 661.4 331.6 661.1 327.9C660.7 324.3 660.5 318.5 660.5 315.0C660.5 311.5 660.7 309.6 661.2 306.9C661.7 304.2 662.5 301.6 663.4 299.0C664.4 296.3 665.6 293.8 667.0 291.3C668.5 288.8 670.1 286.3 672.0 284.0C673.9 281.7 676.0 279.4 678.2 277.3C680.5 275.1 683.0 273.1 685.6 271.2C688.3 269.3 691.1 267.5 694.1 265.8C697.0 264.2 700.2 262.7 703.4 261.3C706.6 260.0 710.0 258.8 713.5 257.7C716.9 256.7 720.5 255.8 724.1 255.1C727.7 254.4 731.4 253.9 735.1 253.5C738.8 253.2 742.6 253.0 746.3 253.0C750.0 253.0 753.8 253.2 757.5 253.5C761.2 253.9 764.9 254.4 768.5 255.1C772.1 255.8 775.7 256.7 779.1 257.7C782.6 258.8 786.0 260.0 789.2 261.3C792.4 262.7 795.6 264.2 798.5 265.8C801.5 267.5 804.3 269.3 807.0 271.2C809.6 273.1 812.1 275.1 814.4 277.3C816.6 279.4 818.7 281.7 820.6 284.0C822.5 286.3 824.1 288.8 825.6 291.3C827.0 293.8 828.2 296.3 829.2 299.0C830.1 301.6 830.9 304.2 831.4 306.9C831.9 309.6 832.1 311.5 832.1 315.0Z" fill="#9a9ba0" stroke="#0a0a0a" stroke-width="1.25" stroke-linejoin="round" />
<path d="M706 296.5 L706 312 A41 28.5 0 0 0 788 312 L788 296.5 Z" fill="url(#gRing)" stroke="#0a0a0a" stroke-width="1.25" stroke-linejoin="round" />
<ellipse cx="747" cy="296.5" rx="41" ry="28.5" fill="#9b9ca1" stroke="#0a0a0a" stroke-width="1.25" />
<ellipse cx="747" cy="296" rx="31" ry="21" fill="url(#gRingIn)" stroke="#0a0a0a" stroke-width="1.25" />
<path d="M458.8 480.0C459.3 473.2 461.0 465.6 463.3 459.5C465.5 453.3 468.5 448.4 472.2 443.2C476.0 438.0 480.6 433.0 485.7 428.4C490.9 423.9 496.8 419.6 503.2 415.8C509.5 412.1 516.6 408.7 523.9 405.9C531.2 403.1 539.1 400.8 547.1 399.0C555.1 397.3 563.5 396.1 571.8 395.5C580.2 394.9 588.7 394.8 597.1 395.4C605.4 396.0 613.8 397.1 621.8 398.8C629.8 400.5 637.8 402.8 645.1 405.5C652.5 408.3 661.0 413.0 666.0 415.4C671.0 417.7 671.0 418.1 675.0 419.5C679.0 420.9 685.8 423.9 690.0 424.0C694.2 424.1 696.7 421.3 700.0 420.0C712.3 415.0 724.5 408.5 737.0 405.0C749.5 401.5 762.5 400.5 775.0 399.0C787.5 397.5 800.7 396.2 812.0 396.0C823.3 395.8 831.7 396.0 843.0 398.0C854.3 400.0 867.2 403.7 880.0 408.0C892.8 412.3 900.0 414.1 920.0 424.0C940.0 433.9 963.3 446.3 1000.0 467.5C1036.7 488.7 1093.3 523.2 1140.0 551.0L1462.0 737.5C1473.0 742.3 1484.5 747.8 1495.0 752.0C1505.5 756.2 1515.5 759.6 1525.0 762.5C1534.5 765.4 1544.0 767.8 1552.0 769.5C1560.0 771.2 1566.3 770.7 1573.2 772.4C1580.1 774.1 1587.2 776.7 1593.3 779.7C1599.4 782.7 1605.1 786.4 1609.7 790.5C1614.4 794.5 1618.3 799.1 1621.2 803.9C1624.1 808.6 1626.1 813.8 1626.9 818.9C1627.8 824.0 1627.6 829.4 1626.4 834.5C1625.3 839.6 1622.9 844.7 1619.8 849.4C1616.6 854.0 1612.3 858.6 1607.4 862.4C1602.5 866.3 1596.6 869.9 1590.3 872.7C1584.1 875.5 1577.0 877.8 1569.8 879.4C1562.7 880.9 1554.9 881.8 1547.4 882.0C1539.9 882.1 1532.1 881.5 1524.8 880.3C1517.5 879.0 1508.4 875.5 1503.8 874.4C1499.1 873.4 1499.2 874.1 1497.0 874.0L1484.0 866.0L1389.0 825.0L1240.0 762.5L890.0 617.5C873.3 613.3 858.3 608.6 840.0 605.0C821.7 601.4 799.2 598.8 780.0 596.0C760.8 593.2 761.7 592.8 725.0 588.3C688.3 583.8 615.0 575.6 560.0 569.2C550.0 567.1 539.2 565.5 530.0 563.0C520.8 560.5 513.3 557.8 505.0 554.0C496.7 550.2 486.5 545.7 480.0 540.0C473.5 534.3 469.3 526.7 466.0 520.0C462.7 513.3 461.2 506.7 460.0 500.0C458.8 493.3 458.2 486.8 458.8 480.0Z" fill="url(#gTop)" stroke="#0a0a0a" stroke-width="1.25" stroke-linejoin="round" />
<path d="M671.0 415.5C671.0 414.6 676.8 414.0 680.0 414.0C683.2 414.0 686.7 414.5 690.0 415.5C693.3 416.5 700.0 419.1 700.0 420.0C700.0 420.9 693.3 421.1 690.0 421.0C686.7 420.9 683.2 420.4 680.0 419.5C676.8 418.6 671.0 416.4 671.0 415.5Z" fill="#fff" stroke="#0a0a0a" stroke-width="1.0" stroke-linejoin="round" />
<path d="M843.0 398.5C855.3 401.8 867.2 404.2 880.0 408.5C892.8 412.8 900.0 414.6 920.0 424.5C940.0 434.4 973.3 453.5 1000.0 468.0L1140.0 551.5L1462.0 738.0C1473.0 742.8 1484.5 748.3 1495.0 752.5C1505.5 756.7 1515.5 760.1 1525.0 763.0C1534.5 765.9 1543.0 767.7 1552.0 770.0" fill="none" stroke="#2a2a2c" stroke-width="2" stroke-linejoin="round" />
<ellipse cx="1545" cy="825.5" rx="82.5" ry="56.5" fill="none" stroke="#0a0a0a" stroke-width="1.2" />
<ellipse cx="585" cy="482" rx="96" ry="67" fill="url(#gHole)" stroke="#0a0a0a" stroke-width="1.25" />
<clipPath id="cHole"><ellipse cx="585" cy="482" rx="96" ry="67"/></clipPath>
<g clip-path="url(#cHole)">
<path d="M494.0 522.0C493.7 519.6 494.8 515.2 496.3 511.9C497.8 508.6 500.1 505.3 503.0 502.3C505.9 499.2 509.6 496.3 513.9 493.6C518.1 491.0 523.0 488.5 528.3 486.4C533.5 484.3 539.4 482.5 545.5 481.0C551.6 479.5 558.2 478.4 564.8 477.6C571.3 476.9 578.3 476.5 585.0 476.5C591.7 476.5 598.7 476.9 605.2 477.6C611.8 478.4 618.4 479.5 624.5 481.0C630.6 482.5 636.5 484.3 641.7 486.4C647.0 488.5 651.9 491.0 656.1 493.6C660.4 496.3 664.1 499.2 667.0 502.3C669.9 505.3 672.2 508.6 673.7 511.9C675.2 515.2 676.3 519.6 676.0 522.0C675.7 524.4 673.0 527.0 672.0 526.0C671.0 525.0 671.3 519.2 669.8 516.0C668.4 512.7 666.2 509.5 663.4 506.5C660.6 503.5 657.0 500.6 653.0 497.9C649.0 495.3 644.3 492.9 639.2 490.8C634.2 488.7 628.6 486.9 622.7 485.5C616.9 484.0 610.7 482.9 604.4 482.1C598.1 481.4 591.5 481.0 585.0 481.0C578.5 481.0 571.9 481.4 565.6 482.1C559.3 482.9 553.1 484.0 547.3 485.5C541.4 486.9 535.8 488.7 530.8 490.8C525.7 492.9 521.0 495.3 517.0 497.9C513.0 500.6 509.4 503.5 506.6 506.5C503.8 509.5 501.6 512.7 500.2 516.0C498.7 519.2 499.0 525.0 498.0 526.0C497.0 527.0 494.3 524.4 494.0 522.0Z" fill="#9c9da2" stroke="#0a0a0a" stroke-width="1.0" stroke-linejoin="round" />
<path d="M498.0 526.0C498.4 518.7 498.7 519.2 500.2 516.0C501.6 512.7 503.8 509.5 506.6 506.5C509.4 503.5 513.0 500.6 517.0 497.9C521.0 495.3 525.7 492.9 530.8 490.8C535.8 488.7 541.4 486.9 547.3 485.5C553.1 484.0 559.3 482.9 565.6 482.1C571.9 481.4 578.5 481.0 585.0 481.0C591.5 481.0 598.1 481.4 604.4 482.1C610.7 482.9 616.9 484.0 622.7 485.5C628.6 486.9 634.2 488.7 639.2 490.8C644.3 492.9 649.0 495.3 653.0 497.9C657.0 500.6 660.6 503.5 663.4 506.5C666.2 509.5 668.4 512.7 669.8 516.0C671.3 519.2 671.6 518.7 672.0 526.0C672.4 533.3 672.0 548.7 672.0 560.0L498.0 560.0C498.0 548.7 497.6 533.3 498.0 526.0Z" fill="url(#gHole2)" stroke="#0a0a0a" stroke-width="1.0" stroke-linejoin="round" />
<ellipse cx="585.5" cy="545" rx="78" ry="44.5" fill="#fff" stroke="#0a0a0a" stroke-width="1.25" />
</g>
<ellipse cx="585" cy="482" rx="96" ry="67" fill="none" stroke="#0a0a0a" stroke-width="1.25" />
<ellipse cx="1546" cy="827" rx="46" ry="32" fill="url(#gCs)" stroke="#0a0a0a" stroke-width="1.25" />
<ellipse cx="1546" cy="833" rx="37.5" ry="26" fill="url(#gTh)" stroke="#0a0a0a" stroke-width="1.25" />
<clipPath id="cTh"><ellipse cx="1546" cy="833" rx="37.5" ry="26"/></clipPath><g clip-path="url(#cTh)">
<path d="M1507.6 833.0C1508.1 831.8 1508.9 828.0 1510.3 825.6C1511.7 823.3 1513.7 821.1 1516.1 819.2C1518.4 817.2 1521.4 815.4 1524.5 814.1C1527.6 812.7 1531.2 811.5 1534.7 810.8C1538.3 810.1 1542.2 809.7 1546.0 809.7C1549.8 809.7 1553.7 810.1 1557.3 810.8C1560.8 811.5 1564.4 812.7 1567.5 814.1C1570.6 815.4 1573.6 817.2 1575.9 819.2C1578.3 821.1 1580.3 823.3 1581.7 825.6C1583.1 828.0 1583.9 831.8 1584.4 833.0" fill="none" stroke="#2e2f32" stroke-width="2.6" stroke-linejoin="round" />
<path d="M1507.6 835.8C1508.1 834.6 1508.9 830.8 1510.3 828.4C1511.7 826.1 1513.7 823.9 1516.1 822.0C1518.4 820.0 1521.4 818.2 1524.5 816.9C1527.6 815.5 1531.2 814.3 1534.7 813.6C1538.3 812.9 1542.2 812.5 1546.0 812.5C1549.8 812.5 1553.7 812.9 1557.3 813.6C1560.8 814.3 1564.4 815.5 1567.5 816.9C1570.6 818.2 1573.6 820.0 1575.9 822.0C1578.3 823.9 1580.3 826.1 1581.7 828.4C1583.1 830.8 1583.9 834.6 1584.4 835.8" fill="none" stroke="#77797e" stroke-width="2.2" stroke-linejoin="round" />
<path d="M1507.6 839.3C1508.1 838.1 1508.9 834.3 1510.3 831.9C1511.7 829.6 1513.7 827.4 1516.1 825.5C1518.4 823.5 1521.4 821.7 1524.5 820.4C1527.6 819.0 1531.2 817.8 1534.7 817.1C1538.3 816.4 1542.2 816.0 1546.0 816.0C1549.8 816.0 1553.7 816.4 1557.3 817.1C1560.8 817.8 1564.4 819.0 1567.5 820.4C1570.6 821.7 1573.6 823.5 1575.9 825.5C1578.3 827.4 1580.3 829.6 1581.7 831.9C1583.1 834.3 1583.9 838.1 1584.4 839.3" fill="none" stroke="#2e2f32" stroke-width="2.6" stroke-linejoin="round" />
<path d="M1507.6 842.1C1508.1 840.9 1508.9 837.1 1510.3 834.7C1511.7 832.4 1513.7 830.2 1516.1 828.3C1518.4 826.3 1521.4 824.5 1524.5 823.2C1527.6 821.8 1531.2 820.6 1534.7 819.9C1538.3 819.2 1542.2 818.8 1546.0 818.8C1549.8 818.8 1553.7 819.2 1557.3 819.9C1560.8 820.6 1564.4 821.8 1567.5 823.2C1570.6 824.5 1573.6 826.3 1575.9 828.3C1578.3 830.2 1580.3 832.4 1581.7 834.7C1583.1 837.1 1583.9 840.9 1584.4 842.1" fill="none" stroke="#77797e" stroke-width="2.2" stroke-linejoin="round" />
<path d="M1507.6 845.6C1508.1 844.4 1508.9 840.6 1510.3 838.2C1511.7 835.9 1513.7 833.7 1516.1 831.8C1518.4 829.8 1521.4 828.0 1524.5 826.7C1527.6 825.3 1531.2 824.1 1534.7 823.4C1538.3 822.7 1542.2 822.3 1546.0 822.3C1549.8 822.3 1553.7 822.7 1557.3 823.4C1560.8 824.1 1564.4 825.3 1567.5 826.7C1570.6 828.0 1573.6 829.8 1575.9 831.8C1578.3 833.7 1580.3 835.9 1581.7 838.2C1583.1 840.6 1583.9 844.4 1584.4 845.6" fill="none" stroke="#2e2f32" stroke-width="2.6" stroke-linejoin="round" />
<path d="M1507.6 848.4C1508.1 847.2 1508.9 843.4 1510.3 841.0C1511.7 838.7 1513.7 836.5 1516.1 834.6C1518.4 832.6 1521.4 830.8 1524.5 829.5C1527.6 828.1 1531.2 826.9 1534.7 826.2C1538.3 825.5 1542.2 825.1 1546.0 825.1C1549.8 825.1 1553.7 825.5 1557.3 826.2C1560.8 826.9 1564.4 828.1 1567.5 829.5C1570.6 830.8 1573.6 832.6 1575.9 834.6C1578.3 836.5 1580.3 838.7 1581.7 841.0C1583.1 843.4 1583.9 847.2 1584.4 848.4" fill="none" stroke="#77797e" stroke-width="2.2" stroke-linejoin="round" />
<path d="M1507.6 851.9C1508.1 850.7 1508.9 846.9 1510.3 844.5C1511.7 842.2 1513.7 840.0 1516.1 838.1C1518.4 836.1 1521.4 834.3 1524.5 833.0C1527.6 831.6 1531.2 830.4 1534.7 829.7C1538.3 829.0 1542.2 828.6 1546.0 828.6C1549.8 828.6 1553.7 829.0 1557.3 829.7C1560.8 830.4 1564.4 831.6 1567.5 833.0C1570.6 834.3 1573.6 836.1 1575.9 838.1C1578.3 840.0 1580.3 842.2 1581.7 844.5C1583.1 846.9 1583.9 850.7 1584.4 851.9" fill="none" stroke="#2e2f32" stroke-width="2.6" stroke-linejoin="round" />
<path d="M1507.6 854.7C1508.1 853.5 1508.9 849.7 1510.3 847.3C1511.7 845.0 1513.7 842.8 1516.1 840.9C1518.4 838.9 1521.4 837.1 1524.5 835.8C1527.6 834.4 1531.2 833.2 1534.7 832.5C1538.3 831.8 1542.2 831.4 1546.0 831.4C1549.8 831.4 1553.7 831.8 1557.3 832.5C1560.8 833.2 1564.4 834.4 1567.5 835.8C1570.6 837.1 1573.6 838.9 1575.9 840.9C1578.3 842.8 1580.3 845.0 1581.7 847.3C1583.1 849.7 1583.9 853.5 1584.4 854.7" fill="none" stroke="#77797e" stroke-width="2.2" stroke-linejoin="round" />
<path d="M1507.6 858.2C1508.1 857.0 1508.9 853.2 1510.3 850.8C1511.7 848.5 1513.7 846.3 1516.1 844.4C1518.4 842.4 1521.4 840.6 1524.5 839.3C1527.6 837.9 1531.2 836.7 1534.7 836.0C1538.3 835.3 1542.2 834.9 1546.0 834.9C1549.8 834.9 1553.7 835.3 1557.3 836.0C1560.8 836.7 1564.4 837.9 1567.5 839.3C1570.6 840.6 1573.6 842.4 1575.9 844.4C1578.3 846.3 1580.3 848.5 1581.7 850.8C1583.1 853.2 1583.9 857.0 1584.4 858.2" fill="none" stroke="#2e2f32" stroke-width="2.6" stroke-linejoin="round" />
<path d="M1507.6 861.0C1508.1 859.8 1508.9 856.0 1510.3 853.6C1511.7 851.3 1513.7 849.1 1516.1 847.2C1518.4 845.2 1521.4 843.4 1524.5 842.1C1527.6 840.7 1531.2 839.5 1534.7 838.8C1538.3 838.1 1542.2 837.7 1546.0 837.7C1549.8 837.7 1553.7 838.1 1557.3 838.8C1560.8 839.5 1564.4 840.7 1567.5 842.1C1570.6 843.4 1573.6 845.2 1575.9 847.2C1578.3 849.1 1580.3 851.3 1581.7 853.6C1583.1 856.0 1583.9 859.8 1584.4 861.0" fill="none" stroke="#77797e" stroke-width="2.2" stroke-linejoin="round" />
<path d="M1507.6 864.5C1508.1 863.3 1508.9 859.5 1510.3 857.1C1511.7 854.8 1513.7 852.6 1516.1 850.7C1518.4 848.7 1521.4 846.9 1524.5 845.6C1527.6 844.2 1531.2 843.0 1534.7 842.3C1538.3 841.6 1542.2 841.2 1546.0 841.2C1549.8 841.2 1553.7 841.6 1557.3 842.3C1560.8 843.0 1564.4 844.2 1567.5 845.6C1570.6 846.9 1573.6 848.7 1575.9 850.7C1578.3 852.6 1580.3 854.8 1581.7 857.1C1583.1 859.5 1583.9 863.3 1584.4 864.5" fill="none" stroke="#2e2f32" stroke-width="2.6" stroke-linejoin="round" />
<path d="M1507.6 867.3C1508.1 866.1 1508.9 862.3 1510.3 859.9C1511.7 857.6 1513.7 855.4 1516.1 853.5C1518.4 851.5 1521.4 849.7 1524.5 848.4C1527.6 847.0 1531.2 845.8 1534.7 845.1C1538.3 844.4 1542.2 844.0 1546.0 844.0C1549.8 844.0 1553.7 844.4 1557.3 845.1C1560.8 845.8 1564.4 847.0 1567.5 848.4C1570.6 849.7 1573.6 851.5 1575.9 853.5C1578.3 855.4 1580.3 857.6 1581.7 859.9C1583.1 862.3 1583.9 866.1 1584.4 867.3" fill="none" stroke="#77797e" stroke-width="2.2" stroke-linejoin="round" />
<path d="M1507.6 870.8C1508.1 869.6 1508.9 865.8 1510.3 863.4C1511.7 861.1 1513.7 858.9 1516.1 857.0C1518.4 855.0 1521.4 853.2 1524.5 851.9C1527.6 850.5 1531.2 849.3 1534.7 848.6C1538.3 847.9 1542.2 847.5 1546.0 847.5C1549.8 847.5 1553.7 847.9 1557.3 848.6C1560.8 849.3 1564.4 850.5 1567.5 851.9C1570.6 853.2 1573.6 855.0 1575.9 857.0C1578.3 858.9 1580.3 861.1 1581.7 863.4C1583.1 865.8 1583.9 869.6 1584.4 870.8" fill="none" stroke="#2e2f32" stroke-width="2.6" stroke-linejoin="round" />
<path d="M1507.6 873.6C1508.1 872.4 1508.9 868.6 1510.3 866.2C1511.7 863.9 1513.7 861.7 1516.1 859.8C1518.4 857.8 1521.4 856.0 1524.5 854.7C1527.6 853.3 1531.2 852.1 1534.7 851.4C1538.3 850.7 1542.2 850.3 1546.0 850.3C1549.8 850.3 1553.7 850.7 1557.3 851.4C1560.8 852.1 1564.4 853.3 1567.5 854.7C1570.6 856.0 1573.6 857.8 1575.9 859.8C1578.3 861.7 1580.3 863.9 1581.7 866.2C1583.1 868.6 1583.9 872.4 1584.4 873.6" fill="none" stroke="#77797e" stroke-width="2.2" stroke-linejoin="round" />
<path d="M1507.6 877.1C1508.1 875.9 1508.9 872.1 1510.3 869.7C1511.7 867.4 1513.7 865.2 1516.1 863.3C1518.4 861.3 1521.4 859.5 1524.5 858.2C1527.6 856.8 1531.2 855.6 1534.7 854.9C1538.3 854.2 1542.2 853.8 1546.0 853.8C1549.8 853.8 1553.7 854.2 1557.3 854.9C1560.8 855.6 1564.4 856.8 1567.5 858.2C1570.6 859.5 1573.6 861.3 1575.9 863.3C1578.3 865.2 1580.3 867.4 1581.7 869.7C1583.1 872.1 1583.9 875.9 1584.4 877.1" fill="none" stroke="#2e2f32" stroke-width="2.6" stroke-linejoin="round" />
<path d="M1507.6 879.9C1508.1 878.7 1508.9 874.9 1510.3 872.5C1511.7 870.2 1513.7 868.0 1516.1 866.1C1518.4 864.1 1521.4 862.3 1524.5 861.0C1527.6 859.6 1531.2 858.4 1534.7 857.7C1538.3 857.0 1542.2 856.6 1546.0 856.6C1549.8 856.6 1553.7 857.0 1557.3 857.7C1560.8 858.4 1564.4 859.6 1567.5 861.0C1570.6 862.3 1573.6 864.1 1575.9 866.1C1578.3 868.0 1580.3 870.2 1581.7 872.5C1583.1 874.9 1583.9 878.7 1584.4 879.9" fill="none" stroke="#77797e" stroke-width="2.2" stroke-linejoin="round" />
<path d="M1507.6 883.4C1508.1 882.2 1508.9 878.4 1510.3 876.0C1511.7 873.7 1513.7 871.5 1516.1 869.6C1518.4 867.6 1521.4 865.8 1524.5 864.5C1527.6 863.1 1531.2 861.9 1534.7 861.2C1538.3 860.5 1542.2 860.1 1546.0 860.1C1549.8 860.1 1553.7 860.5 1557.3 861.2C1560.8 861.9 1564.4 863.1 1567.5 864.5C1570.6 865.8 1573.6 867.6 1575.9 869.6C1578.3 871.5 1580.3 873.7 1581.7 876.0C1583.1 878.4 1583.9 882.2 1584.4 883.4" fill="none" stroke="#2e2f32" stroke-width="2.6" stroke-linejoin="round" />
<path d="M1507.6 886.2C1508.1 885.0 1508.9 881.2 1510.3 878.8C1511.7 876.5 1513.7 874.3 1516.1 872.4C1518.4 870.4 1521.4 868.6 1524.5 867.3C1527.6 865.9 1531.2 864.7 1534.7 864.0C1538.3 863.3 1542.2 862.9 1546.0 862.9C1549.8 862.9 1553.7 863.3 1557.3 864.0C1560.8 864.7 1564.4 865.9 1567.5 867.3C1570.6 868.6 1573.6 870.4 1575.9 872.4C1578.3 874.3 1580.3 876.5 1581.7 878.8C1583.1 881.2 1583.9 885.0 1584.4 886.2" fill="none" stroke="#77797e" stroke-width="2.2" stroke-linejoin="round" />
</g>
<path d="M705.6 447.4C706.0 444.2 707.0 441.4 709.0 439.0C711.0 436.6 713.9 434.8 717.4 432.8C720.9 430.8 724.8 429.0 730.0 427.0C735.2 425.0 741.8 422.8 748.5 421.0C755.2 419.2 763.3 417.4 770.0 416.0C776.7 414.6 781.9 413.4 788.6 412.5C795.3 411.6 803.1 411.1 810.0 410.8C816.9 410.6 823.3 410.5 830.0 411.0C836.7 411.5 843.7 412.4 850.0 414.0C856.3 415.6 862.1 418.0 868.0 420.5C873.9 423.0 879.6 426.3 885.4 429.2L1002.0 494.0L1139.0 570.2C1141.0 573.1 1143.6 576.3 1145.0 579.0C1146.4 581.7 1146.8 579.6 1147.6 586.4C1148.4 593.2 1149.0 607.2 1150.0 620.0C1151.0 632.8 1153.2 654.6 1153.3 663.3C1153.4 672.0 1152.1 669.5 1150.5 672.0C1148.9 674.5 1146.3 676.6 1143.7 678.6C1141.1 680.6 1137.9 682.5 1135.0 684.0C1132.1 685.5 1130.1 686.6 1126.4 687.3C1122.7 688.0 1117.8 688.7 1113.0 688.2C1108.2 687.7 1102.7 685.7 1097.6 684.4L1030.0 655.5C996.7 642.7 959.2 627.9 930.0 617.0C900.8 606.1 880.0 596.2 855.0 590.0C830.0 583.8 798.7 582.0 780.0 579.5C761.3 577.0 753.4 576.2 743.0 575.0C732.6 573.8 725.3 573.9 717.4 572.4C709.5 570.9 701.3 568.9 695.5 566.0C689.7 563.1 685.1 559.2 682.8 555.0C680.5 550.8 680.1 545.7 681.9 540.5C683.7 535.3 689.6 531.3 693.7 524.0C697.8 516.7 703.8 505.2 706.5 496.7C709.2 488.2 710.0 479.4 710.0 473.0C710.0 466.6 707.2 462.7 706.5 458.4C705.8 454.1 705.2 450.6 705.6 447.4Z" fill="url(#gPkCh)" stroke="#0a0a0a" stroke-width="1.25" stroke-linejoin="round" />
<path d="M710.0 473.0C708.2 477.6 709.2 488.2 706.5 496.7C703.8 505.2 697.8 516.7 693.7 524.0C689.6 531.3 683.7 535.3 681.9 540.5C680.1 545.7 680.5 550.8 682.8 555.0C685.1 559.2 689.7 563.1 695.5 566.0C701.3 568.9 710.1 570.3 717.4 572.4L713.8 571.5C708.3 569.0 701.4 566.8 697.4 564.0C693.4 561.2 691.2 558.9 690.0 555.0C688.8 551.1 688.5 545.7 690.0 540.5C691.5 535.3 695.3 531.6 699.0 524.0C702.7 516.4 708.9 504.1 712.0 495.0C715.1 485.9 715.6 477.9 717.4 469.3C714.9 470.5 711.8 468.4 710.0 473.0Z" fill="url(#gPkLc)" stroke="#0a0a0a" stroke-width="1.0" stroke-linejoin="round" />
<path d="M885.4 429.2L1002.0 494.0L1139.0 570.2L1139.0 590.0L1085.0 552.4L881.5 438.4L885.4 429.2Z" fill="#5a5a5c" stroke="#0a0a0a" stroke-width="1.1" stroke-linejoin="round" />
<path d="M714.7 451.0C715.8 449.3 716.3 447.4 718.0 446.0C719.7 444.6 721.5 444.2 724.7 442.9C727.9 441.6 732.5 439.7 737.0 438.0C741.5 436.3 746.5 434.5 752.0 432.8C757.5 431.1 763.9 429.4 770.0 428.0C776.1 426.6 781.9 425.4 788.6 424.6C795.3 423.8 803.1 423.3 810.0 423.0C816.9 422.7 823.0 422.4 830.0 422.8C837.0 423.2 845.7 424.2 852.0 425.5C858.3 426.8 863.1 428.4 868.0 430.5C872.9 432.6 877.0 435.8 881.5 438.4L881.5 506.0C872.7 502.7 863.6 499.0 855.0 496.0C846.4 493.0 839.5 489.4 830.0 488.0C820.5 486.6 808.5 486.3 797.7 487.6C786.9 488.9 775.9 493.2 765.0 496.0L752.0 503.0L720.0 500.0C719.8 499.5 719.3 500.6 719.3 498.5C719.3 496.4 720.3 492.5 720.0 487.6C719.7 482.7 718.3 475.4 717.4 469.3C716.5 463.2 715.6 457.1 714.7 451.0Z" fill="url(#gPkBack)" stroke="#0a0a0a" stroke-width="1.25" stroke-linejoin="round" />
<path d="M714.7 451.0C715.8 449.3 716.3 447.4 718.0 446.0C719.7 444.6 722.6 443.8 724.7 442.9C726.8 442.0 728.6 441.3 730.5 440.5L730.5 489.0L720.0 497.5C720.0 494.2 720.4 492.3 720.0 487.6C719.6 482.9 718.3 475.4 717.4 469.3C716.5 463.2 715.6 457.1 714.7 451.0Z" fill="url(#gPkBackL)" stroke="#0a0a0a" stroke-width="1.0" stroke-linejoin="round" />
<path d="M730.5 440.5C732.7 439.7 733.4 439.3 737.0 438.0C740.6 436.7 747.0 434.5 752.0 432.8L752.0 483.0L730.5 489.0L730.5 440.5Z" fill="#4b4c51" stroke="#0a0a0a" stroke-width="1.0" stroke-linejoin="round" />
<path d="M881.5 438.4L1085.0 552.4L1140.0 583.0L1142.0 660.0L1085.0 622.2L881.5 506.0L881.5 438.4Z" fill="#47484d" stroke="#0a0a0a" stroke-width="1.25" stroke-linejoin="round" />
<path d="M719.3 498.5C720.2 502.3 721.1 505.1 722.0 510.0C722.9 514.9 724.5 522.4 724.7 527.7C725.0 533.0 724.1 537.5 723.5 542.0C722.9 546.5 722.6 550.1 721.0 555.0C719.4 559.9 716.2 566.0 713.8 571.5C708.3 569.0 701.4 566.8 697.4 564.0C693.4 561.2 691.2 558.9 690.0 555.0C688.8 551.1 688.5 545.7 690.0 540.5C691.5 535.3 695.3 531.6 699.0 524.0C702.7 516.4 708.9 504.1 712.0 495.0C715.1 485.9 715.6 477.9 717.4 469.3L719.3 498.5Z" fill="url(#gPkL)" stroke="#0a0a0a" stroke-width="1.1" stroke-linejoin="round" />
<path d="M699.0 524.0C698.2 526.7 694.7 534.7 694.0 540.0C693.3 545.3 694.0 551.8 695.0 556.0C696.0 560.2 699.2 563.5 700.0 565.0" fill="none" stroke="#0a0a0a" stroke-width="1.0" stroke-linejoin="round" />
<path d="M690.0 531.0C690.8 531.8 693.5 534.8 695.0 536.0C696.5 537.2 698.3 537.7 699.0 538.0" fill="none" stroke="#0a0a0a" stroke-width="1.0" stroke-linejoin="round" />
<path d="M719.5 505.0C719.8 508.7 721.1 519.8 721.0 527.0C720.9 534.2 720.7 540.8 719.0 548.0C717.3 555.2 712.3 566.3 711.0 570.0" fill="none" stroke="#55565a" stroke-width="1.0" stroke-linejoin="round" />
<path d="M719.3 498.5C723.0 495.3 727.2 490.6 730.5 489.0C733.8 487.4 736.2 489.0 739.0 489.0C740.3 495.8 741.2 503.1 743.0 509.5C744.8 516.0 748.7 522.3 750.0 527.7C751.3 533.1 751.2 537.5 751.0 542.0C750.8 546.5 750.8 549.7 748.5 555.0C746.2 560.3 741.2 567.7 737.5 574.0L713.8 571.5C716.2 566.0 719.4 559.9 721.0 555.0C722.6 550.1 722.9 546.5 723.5 542.0C724.1 537.5 725.0 533.0 724.7 527.7C724.5 522.4 722.9 514.9 722.0 510.0C721.1 505.1 720.2 502.3 719.3 498.5Z" fill="#8d8e93" stroke="#0a0a0a" stroke-width="1.1" stroke-linejoin="round" />
<path d="M739.0 489.0C743.3 487.0 747.7 485.1 752.0 483.0C756.3 480.9 760.7 478.7 765.0 476.6L765.0 496.0L752.0 503.0L746.0 500.0L739.0 489.0Z" fill="#a7a8ad" stroke="#0a0a0a" stroke-width="1.0" stroke-linejoin="round" />
<path d="M739.0 489.0C739.5 491.3 740.3 499.8 742.0 503.0C743.7 506.2 747.3 508.0 749.0 508.0C750.7 508.0 751.5 503.8 752.0 503.0" fill="none" stroke="#0a0a0a" stroke-width="1.0" stroke-linejoin="round" />
<path d="M752.0 502.0C756.3 500.0 760.3 497.8 765.0 496.0C769.7 494.2 774.5 492.4 780.0 491.0C785.5 489.6 789.4 488.1 797.7 487.6C806.0 487.1 820.5 486.9 830.0 488.0C839.5 489.1 848.0 491.9 855.0 494.0C862.0 496.1 867.6 498.5 872.0 500.5C876.4 502.5 878.3 504.2 881.5 506.0L1085.0 622.2L1141.0 655.0C1141.7 659.3 1143.7 664.2 1143.0 668.0C1142.3 671.8 1140.2 675.2 1137.0 678.0C1133.8 680.8 1128.5 683.2 1124.0 684.5C1119.5 685.8 1114.3 685.9 1110.0 685.5C1105.7 685.1 1102.0 683.2 1098.0 682.0L1030.0 653.5C996.7 640.7 959.2 625.9 930.0 615.0C900.8 604.1 880.0 594.3 855.0 588.0C830.0 581.7 796.8 579.7 780.0 577.0C763.2 574.3 762.7 573.7 754.0 572.0C754.8 566.3 756.2 560.8 756.5 555.0C756.8 549.2 756.3 543.2 755.8 537.0C755.3 530.8 754.1 523.8 753.5 518.0C752.9 512.2 752.5 507.3 752.0 502.0Z" fill="#fff" stroke="#0a0a0a" stroke-width="1.1" stroke-linejoin="round" />
<path d="M743.0 509.5C744.2 512.5 748.7 522.3 750.0 527.7C751.3 533.1 751.2 537.5 751.0 542.0C750.8 546.5 749.7 550.8 748.5 555.0C747.3 559.2 743.1 564.2 744.0 567.0C744.9 569.8 752.3 571.2 754.0 572.0" fill="none" stroke="#0a0a0a" stroke-width="1.0" stroke-linejoin="round" />
<path d="M1139.0 590.3C1140.3 592.5 1141.8 588.7 1143.0 597.0C1144.2 605.3 1145.3 628.8 1146.0 640.0C1146.7 651.2 1147.5 658.5 1147.0 664.0C1146.5 669.5 1144.0 670.8 1143.0 673.0C1142.0 675.2 1141.7 675.7 1141.0 677.0L1141.0 655.0L1139.0 590.3Z" fill="url(#gPkR)" stroke="#0a0a0a" stroke-width="1.1" stroke-linejoin="round" />
<path d="M1139 570.2 L1139 590.3 M1147.6 586.4 L1143 597 M1153.3 663.3 L1147 664" fill="none" stroke="#0a0a0a" stroke-width="1.0" stroke-linejoin="round" />
<path d="M1169.0 650.0C1168.8 643.1 1168.3 642.4 1169.0 638.4C1169.7 634.4 1170.4 629.3 1173.0 626.0C1175.6 622.7 1180.9 620.4 1184.6 618.5C1188.3 616.6 1191.3 615.4 1195.0 614.5C1198.7 613.6 1203.2 613.2 1207.0 613.4C1210.8 613.6 1214.5 614.4 1218.0 615.5C1221.5 616.6 1224.5 618.7 1227.8 620.3L1265.0 641.0C1268.0 643.5 1271.7 645.5 1274.0 648.5C1276.3 651.5 1278.0 652.3 1278.9 659.2C1279.9 666.1 1279.6 679.6 1279.7 690.0C1279.8 700.4 1280.2 714.9 1279.7 721.5C1279.2 728.1 1278.5 727.2 1277.0 729.5C1275.5 731.8 1273.3 733.5 1271.0 735.3C1268.7 737.1 1265.9 739.0 1263.0 740.3C1260.1 741.6 1258.2 742.5 1253.8 743.1C1249.4 743.7 1242.3 744.7 1236.5 744.0C1230.7 743.3 1226.4 741.7 1219.2 738.8C1212.0 735.9 1200.1 730.7 1193.2 726.7C1186.3 722.7 1181.1 718.7 1177.7 714.6C1174.3 710.5 1174.2 707.8 1173.0 702.0C1171.8 696.2 1171.2 688.7 1170.5 680.0C1169.8 671.3 1169.2 656.9 1169.0 650.0Z" fill="#59595c" stroke="#0a0a0a" stroke-width="1.25" stroke-linejoin="round" />
<clipPath id="gS1k"><path d="M1169.0 650.0C1168.8 643.1 1168.3 642.4 1169.0 638.4C1169.7 634.4 1170.4 629.3 1173.0 626.0C1175.6 622.7 1180.9 620.4 1184.6 618.5C1188.3 616.6 1191.3 615.4 1195.0 614.5C1198.7 613.6 1203.2 613.2 1207.0 613.4C1210.8 613.6 1214.5 614.4 1218.0 615.5C1221.5 616.6 1224.5 618.7 1227.8 620.3L1265.0 641.0C1268.0 643.5 1271.7 645.5 1274.0 648.5C1276.3 651.5 1278.0 652.3 1278.9 659.2C1279.9 666.1 1279.6 679.6 1279.7 690.0C1279.8 700.4 1280.2 714.9 1279.7 721.5C1279.2 728.1 1278.5 727.2 1277.0 729.5C1275.5 731.8 1273.3 733.5 1271.0 735.3C1268.7 737.1 1265.9 739.0 1263.0 740.3C1260.1 741.6 1258.2 742.5 1253.8 743.1C1249.4 743.7 1242.3 744.7 1236.5 744.0C1230.7 743.3 1226.4 741.7 1219.2 738.8C1212.0 735.9 1200.1 730.7 1193.2 726.7C1186.3 722.7 1181.1 718.7 1177.7 714.6C1174.3 710.5 1174.2 707.8 1173.0 702.0C1171.8 696.2 1171.2 688.7 1170.5 680.0C1169.8 671.3 1169.2 656.9 1169.0 650.0Z"/></clipPath>
<g clip-path="url(#gS1k)"><rect x="1168" y="500" width="60" height="400" fill="url(#gS1o)"/></g>
<path d="M1169.0 650.0C1168.8 643.1 1168.3 642.4 1169.0 638.4C1169.7 634.4 1170.4 629.3 1173.0 626.0C1175.6 622.7 1180.9 620.4 1184.6 618.5C1188.3 616.6 1191.3 615.4 1195.0 614.5C1198.7 613.6 1203.2 613.2 1207.0 613.4C1210.8 613.6 1214.5 614.4 1218.0 615.5C1221.5 616.6 1224.5 618.7 1227.8 620.3L1265.0 641.0C1268.0 643.5 1271.7 645.5 1274.0 648.5C1276.3 651.5 1278.0 652.3 1278.9 659.2C1279.9 666.1 1279.6 679.6 1279.7 690.0C1279.8 700.4 1280.2 714.9 1279.7 721.5C1279.2 728.1 1278.5 727.2 1277.0 729.5C1275.5 731.8 1273.3 733.5 1271.0 735.3C1268.7 737.1 1265.9 739.0 1263.0 740.3C1260.1 741.6 1258.2 742.5 1253.8 743.1C1249.4 743.7 1242.3 744.7 1236.5 744.0C1230.7 743.3 1226.4 741.7 1219.2 738.8C1212.0 735.9 1200.1 730.7 1193.2 726.7C1186.3 722.7 1181.1 718.7 1177.7 714.6C1174.3 710.5 1174.2 707.8 1173.0 702.0C1171.8 696.2 1171.2 688.7 1170.5 680.0C1169.8 671.3 1169.2 656.9 1169.0 650.0Z" fill="none" stroke="#0a0a0a" stroke-width="1.25" stroke-linejoin="round" />
<path d="M1178.5 655.0C1178.1 648.7 1177.8 645.7 1178.5 642.0C1179.2 638.3 1180.6 635.6 1183.0 633.0C1185.4 630.4 1188.4 627.5 1193.0 626.3C1197.6 625.0 1205.3 624.8 1210.5 625.5C1215.7 626.2 1219.8 629.0 1224.4 630.7L1224.4 696.0C1219.8 695.0 1215.4 693.2 1210.5 693.0C1205.6 692.8 1199.5 693.1 1195.0 694.7C1190.5 696.3 1187.5 699.9 1183.7 702.5C1182.8 695.0 1181.9 687.9 1181.0 680.0C1180.1 672.1 1178.9 661.3 1178.5 655.0Z" fill="url(#gS1w)" stroke="#0a0a0a" stroke-width="1.1" stroke-linejoin="round" />
<path d="M1224.4 630.7L1260.7 650.6L1260.7 717.2L1224.4 696.0L1224.4 630.7Z" fill="#47484d" stroke="#0a0a0a" stroke-width="1.1" stroke-linejoin="round" />
<path d="M1260.7 650.6C1262.6 652.4 1265.0 654.0 1266.5 656.0C1268.0 658.0 1269.2 657.0 1270.0 662.7C1270.8 668.4 1270.8 679.6 1271.0 690.0C1271.2 700.4 1271.3 718.2 1271.0 725.0C1270.7 731.8 1269.9 729.0 1269.4 731.0L1260.7 717.2L1260.7 650.6Z" fill="url(#gS1r)" stroke="#0a0a0a" stroke-width="1.1" stroke-linejoin="round" />
<path d="M1183.7 702.5C1187.5 699.9 1190.5 696.3 1195.0 694.7C1199.5 693.1 1205.6 692.8 1210.5 693.0C1215.4 693.2 1219.8 695.0 1224.4 696.0L1260.7 717.2C1263.6 720.4 1267.9 724.4 1269.4 726.7C1271.0 729.0 1270.3 729.6 1270.0 731.0C1269.7 732.4 1269.1 733.9 1267.6 735.3C1266.1 736.7 1263.3 738.4 1261.0 739.5C1258.7 740.6 1258.5 741.6 1253.8 742.2C1249.1 742.8 1239.3 743.9 1233.0 743.0C1226.7 742.1 1221.2 739.2 1216.0 737.0C1210.8 734.8 1206.9 733.2 1201.9 730.0C1197.0 726.8 1189.4 721.3 1186.3 718.0C1183.2 714.7 1183.9 712.6 1183.5 710.0C1183.1 707.4 1183.6 705.0 1183.7 702.5Z" fill="#fff" stroke="#0a0a0a" stroke-width="1.1" stroke-linejoin="round" />
<path d="M1169.5 640 L1178.5 644 M1173 703 L1183 701 M1227.8 620.3 L1224.4 630.7 M1265 641 L1260.7 650.6 M1279 662 L1270.5 666 M1279.7 721.5 L1271 725" fill="none" stroke="#0a0a0a" stroke-width="1.0" stroke-linejoin="round" />
<path d="M1270.5 666.0L1279.0 662.0L1279.7 721.5L1271.0 725.0L1270.5 666.0Z" fill="url(#gS1rs)" stroke="#0a0a0a" stroke-width="1.0" stroke-linejoin="round" />
<path d="M1296.9 735.0C1296.7 726.8 1296.6 716.8 1296.9 711.5C1297.2 706.2 1298.0 705.8 1299.0 703.5C1300.0 701.2 1301.1 699.6 1303.0 697.7C1304.9 695.8 1307.7 693.7 1310.5 692.0C1313.3 690.3 1316.6 688.7 1320.0 687.7C1323.4 686.8 1327.4 686.4 1331.0 686.3C1334.6 686.2 1337.3 685.9 1341.5 687.0C1345.7 688.1 1351.2 691.0 1356.0 693.0L1463.0 753.0C1466.0 755.3 1469.5 757.4 1472.0 760.0C1474.5 762.6 1476.7 765.7 1478.3 768.4C1479.9 771.1 1480.9 773.4 1481.5 776.0C1482.1 778.6 1482.3 781.0 1482.0 783.8C1481.7 786.6 1481.2 790.0 1479.8 793.0C1478.4 796.0 1476.0 798.9 1473.5 801.5C1471.0 804.1 1467.8 806.3 1464.5 808.4C1461.2 810.5 1457.8 812.4 1454.0 814.0C1450.2 815.6 1445.4 817.5 1441.4 818.3C1437.4 819.1 1433.8 819.1 1430.0 819.0C1426.2 818.9 1422.3 818.1 1418.4 817.6L1318.4 779.0C1315.6 777.7 1312.3 776.5 1310.0 775.0C1307.7 773.5 1306.5 772.4 1304.6 770.0C1302.7 767.6 1299.7 766.5 1298.4 760.7C1297.1 754.9 1297.2 743.2 1296.9 735.0Z" fill="#59595c" stroke="#0a0a0a" stroke-width="1.25" stroke-linejoin="round" />
<clipPath id="gS2k"><path d="M1296.9 735.0C1296.7 726.8 1296.6 716.8 1296.9 711.5C1297.2 706.2 1298.0 705.8 1299.0 703.5C1300.0 701.2 1301.1 699.6 1303.0 697.7C1304.9 695.8 1307.7 693.7 1310.5 692.0C1313.3 690.3 1316.6 688.7 1320.0 687.7C1323.4 686.8 1327.4 686.4 1331.0 686.3C1334.6 686.2 1337.3 685.9 1341.5 687.0C1345.7 688.1 1351.2 691.0 1356.0 693.0L1463.0 753.0C1466.0 755.3 1469.5 757.4 1472.0 760.0C1474.5 762.6 1476.7 765.7 1478.3 768.4C1479.9 771.1 1480.9 773.4 1481.5 776.0C1482.1 778.6 1482.3 781.0 1482.0 783.8C1481.7 786.6 1481.2 790.0 1479.8 793.0C1478.4 796.0 1476.0 798.9 1473.5 801.5C1471.0 804.1 1467.8 806.3 1464.5 808.4C1461.2 810.5 1457.8 812.4 1454.0 814.0C1450.2 815.6 1445.4 817.5 1441.4 818.3C1437.4 819.1 1433.8 819.1 1430.0 819.0C1426.2 818.9 1422.3 818.1 1418.4 817.6L1318.4 779.0C1315.6 777.7 1312.3 776.5 1310.0 775.0C1307.7 773.5 1306.5 772.4 1304.6 770.0C1302.7 767.6 1299.7 766.5 1298.4 760.7C1297.1 754.9 1297.2 743.2 1296.9 735.0Z"/></clipPath>
<g clip-path="url(#gS2k)"><rect x="1296" y="500" width="60" height="400" fill="url(#gS2o)"/></g>
<path d="M1296.9 735.0C1296.7 726.8 1296.6 716.8 1296.9 711.5C1297.2 706.2 1298.0 705.8 1299.0 703.5C1300.0 701.2 1301.1 699.6 1303.0 697.7C1304.9 695.8 1307.7 693.7 1310.5 692.0C1313.3 690.3 1316.6 688.7 1320.0 687.7C1323.4 686.8 1327.4 686.4 1331.0 686.3C1334.6 686.2 1337.3 685.9 1341.5 687.0C1345.7 688.1 1351.2 691.0 1356.0 693.0L1463.0 753.0C1466.0 755.3 1469.5 757.4 1472.0 760.0C1474.5 762.6 1476.7 765.7 1478.3 768.4C1479.9 771.1 1480.9 773.4 1481.5 776.0C1482.1 778.6 1482.3 781.0 1482.0 783.8C1481.7 786.6 1481.2 790.0 1479.8 793.0C1478.4 796.0 1476.0 798.9 1473.5 801.5C1471.0 804.1 1467.8 806.3 1464.5 808.4C1461.2 810.5 1457.8 812.4 1454.0 814.0C1450.2 815.6 1445.4 817.5 1441.4 818.3C1437.4 819.1 1433.8 819.1 1430.0 819.0C1426.2 818.9 1422.3 818.1 1418.4 817.6L1318.4 779.0C1315.6 777.7 1312.3 776.5 1310.0 775.0C1307.7 773.5 1306.5 772.4 1304.6 770.0C1302.7 767.6 1299.7 766.5 1298.4 760.7C1297.1 754.9 1297.2 743.2 1296.9 735.0Z" fill="none" stroke="#0a0a0a" stroke-width="1.25" stroke-linejoin="round" />
<path d="M1306.9 740.0C1306.8 733.0 1306.3 723.3 1306.9 718.0C1307.5 712.7 1308.3 711.4 1310.7 708.4C1313.1 705.4 1316.9 701.5 1321.5 700.0C1326.1 698.5 1333.3 698.7 1338.4 699.2C1343.5 699.7 1347.7 701.7 1352.3 703.0L1352.3 768.4C1348.7 767.8 1346.4 766.6 1341.5 766.5C1336.6 766.4 1328.1 766.7 1323.0 767.6C1317.9 768.5 1314.8 770.5 1310.7 772.0C1309.6 768.0 1308.1 765.3 1307.5 760.0C1306.9 754.7 1307.0 747.0 1306.9 740.0Z" fill="url(#gS2w)" stroke="#0a0a0a" stroke-width="1.1" stroke-linejoin="round" />
<path d="M1352.3 703.0L1457.6 763.8L1457.6 812.0L1433.7 817.6L1352.3 768.4L1352.3 703.0Z" fill="#47484d" stroke="#0a0a0a" stroke-width="1.1" stroke-linejoin="round" />
<path d="M1457.6 763.8C1460.1 765.4 1462.8 766.7 1465.0 768.5C1467.2 770.3 1469.2 772.4 1470.6 774.5C1472.0 776.6 1472.8 779.0 1473.3 781.0C1473.8 783.0 1474.1 784.5 1473.7 786.8C1473.3 789.1 1472.5 792.3 1471.0 795.0C1469.5 797.7 1466.7 800.2 1464.5 803.0C1462.3 805.8 1459.9 809.0 1457.6 812.0L1457.6 763.8Z" fill="url(#gS2r)" stroke="#0a0a0a" stroke-width="1.1" stroke-linejoin="round" />
<path d="M1310.7 772.0C1314.8 770.5 1317.9 768.5 1323.0 767.6C1328.1 766.7 1336.6 766.4 1341.5 766.5C1346.4 766.6 1348.7 767.8 1352.3 768.4L1433.7 817.6C1431.1 817.8 1428.5 818.4 1426.0 818.3C1423.5 818.2 1420.9 817.4 1418.4 817.0L1318.4 778.5C1316.6 777.7 1314.3 777.1 1313.0 776.0C1311.7 774.9 1311.5 773.3 1310.7 772.0Z" fill="#fff" stroke="#0a0a0a" stroke-width="1.1" stroke-linejoin="round" />
<path d="M1297.5 714 L1306.9 718 M1356 693 L1352.3 703 M1463 753 L1457.6 763.8 M1298.4 760.7 L1308 758" fill="none" stroke="#0a0a0a" stroke-width="1.0" stroke-linejoin="round" />
<path d="M867.1 482.7C868.3 482.1 871.8 479.2 874.1 478.8C876.4 478.4 878.9 478.6 881.1 480.4C883.3 482.2 886.0 485.8 887.5 489.6C889.1 493.4 890.0 498.2 890.5 503.5C890.9 508.7 890.8 515.1 890.1 521.0C889.4 526.9 888.1 533.0 886.0 538.7C883.9 544.5 880.9 550.4 877.3 555.4C873.7 560.5 868.5 565.1 864.4 569.0C860.3 572.8 856.2 576.3 852.5 578.3C848.8 580.3 845.2 580.6 842.1 580.9C839.0 581.2 835.1 580.2 833.8 580.1" fill="none" stroke="#53c4a2" stroke-width="2.1" stroke-linejoin="round" />
<path d="M867.1 482.7C865.5 487.3 860.1 500.3 857.2 510.1C854.2 519.9 851.4 531.7 849.4 541.3C847.4 550.9 845.8 561.0 845.1 567.8C844.5 574.6 845.4 579.8 845.5 582.2" fill="none" stroke="#53c4a2" stroke-width="2.1" stroke-linejoin="round" />
<path d="M886.8 493.6C887.9 493.0 891.3 490.2 893.5 489.9C895.8 489.5 898.1 489.7 900.2 491.4C902.4 493.2 904.9 496.6 906.4 500.3C907.9 504.0 908.8 508.6 909.1 513.6C909.5 518.6 909.5 524.8 908.7 530.5C908.0 536.1 906.8 542.0 904.8 547.5C902.7 553.0 899.8 558.7 896.3 563.5C892.9 568.4 887.9 572.8 883.9 576.5C879.9 580.1 876.0 583.5 872.4 585.4C868.8 587.3 865.4 587.6 862.4 587.9C859.4 588.2 855.7 587.2 854.4 587.1" fill="none" stroke="#53c4a2" stroke-width="2.1" stroke-linejoin="round" />
<path d="M886.8 493.6C885.2 498.0 880.0 510.5 877.1 519.9C874.2 529.3 871.5 540.6 869.5 549.9C867.6 559.1 866.0 568.8 865.4 575.3C864.7 581.9 865.6 586.9 865.7 589.2" fill="none" stroke="#53c4a2" stroke-width="2.1" stroke-linejoin="round" />
<path d="M906.4 504.5C907.5 503.9 910.8 501.3 912.9 500.9C915.1 500.6 917.3 500.8 919.3 502.4C921.4 504.1 923.8 507.4 925.2 511.0C926.6 514.5 927.5 518.9 927.8 523.8C928.2 528.6 928.1 534.5 927.4 539.9C926.7 545.3 925.5 551.0 923.5 556.3C921.5 561.6 918.7 567.0 915.4 571.6C912.0 576.2 907.2 580.5 903.4 584.0C899.6 587.5 895.8 590.8 892.3 592.6C888.9 594.4 885.6 594.6 882.8 594.9C879.9 595.1 876.3 594.2 875.1 594.1" fill="none" stroke="#53c4a2" stroke-width="2.1" stroke-linejoin="round" />
<path d="M906.4 504.5C904.9 508.7 899.9 520.7 897.1 529.7C894.3 538.7 891.6 549.6 889.7 558.4C887.8 567.3 886.3 576.6 885.6 582.9C885.0 589.1 885.8 593.9 885.9 596.1" fill="none" stroke="#53c4a2" stroke-width="2.1" stroke-linejoin="round" />
<path d="M926.1 515.4C927.1 514.8 930.3 512.3 932.3 512.0C934.4 511.7 936.5 511.9 938.5 513.5C940.4 515.1 942.7 518.2 944.1 521.6C945.4 525.0 946.2 529.3 946.5 533.9C946.9 538.5 946.8 544.2 946.1 549.4C945.3 554.6 944.2 560.0 942.3 565.0C940.3 570.1 937.6 575.3 934.4 579.7C931.2 584.1 926.6 588.2 922.9 591.5C919.2 594.9 915.6 598.0 912.3 599.7C909.0 601.4 905.8 601.6 903.1 601.9C900.3 602.1 896.9 601.2 895.7 601.1" fill="none" stroke="#53c4a2" stroke-width="2.1" stroke-linejoin="round" />
<path d="M926.1 515.4C924.6 519.4 919.8 530.9 917.0 539.5C914.3 548.1 911.7 558.5 909.9 567.0C908.0 575.5 906.5 584.3 905.9 590.4C905.2 596.4 906.0 601.0 906.0 603.1" fill="none" stroke="#53c4a2" stroke-width="2.1" stroke-linejoin="round" />
<path d="M945.8 526.2C946.8 525.7 949.8 523.3 951.7 523.0C953.7 522.7 955.7 522.9 957.6 524.5C959.5 526.0 961.7 529.0 962.9 532.3C964.2 535.6 964.9 539.6 965.2 544.1C965.5 548.5 965.4 553.9 964.7 558.9C964.0 563.8 962.9 569.0 961.0 573.8C959.2 578.6 956.6 583.6 953.5 587.8C950.3 592.0 945.9 595.9 942.4 599.1C938.9 602.2 935.4 605.2 932.2 606.8C929.0 608.5 926.0 608.7 923.4 608.9C920.8 609.1 917.5 608.2 916.4 608.1" fill="none" stroke="#53c4a2" stroke-width="2.1" stroke-linejoin="round" />
<path d="M945.8 526.2C944.3 530.1 939.6 541.0 937.0 549.3C934.4 557.5 931.9 567.4 930.0 575.5C928.2 583.6 926.7 592.1 926.1 597.9C925.5 603.6 926.2 608.0 926.2 610.0" fill="none" stroke="#53c4a2" stroke-width="2.1" stroke-linejoin="round" />
<path d="M965.4 537.1C966.4 536.6 969.3 534.4 971.1 534.1C973.0 533.8 975.0 534.0 976.7 535.5C978.5 537.0 980.6 539.9 981.8 543.0C983.0 546.1 983.7 550.0 983.9 554.2C984.2 558.4 984.0 563.6 983.4 568.3C982.7 573.1 981.6 578.0 979.8 582.6C978.0 587.2 975.5 591.9 972.5 595.9C969.5 599.9 965.3 603.6 961.9 606.6C958.5 609.6 955.2 612.4 952.1 614.0C949.1 615.5 946.3 615.7 943.7 615.9C941.2 616.1 938.1 615.2 937.0 615.1" fill="none" stroke="#53c4a2" stroke-width="2.1" stroke-linejoin="round" />
<path d="M965.4 537.1C964.0 540.8 959.5 551.2 957.0 559.0C954.4 566.9 952.0 576.4 950.2 584.1C948.4 591.8 947.0 599.9 946.4 605.4C945.7 610.9 946.4 615.1 946.4 617.0" fill="none" stroke="#53c4a2" stroke-width="2.1" stroke-linejoin="round" />
<path d="M985.1 548.0C986.0 547.5 988.8 545.4 990.6 545.1C992.3 544.9 994.2 545.1 995.9 546.5C997.5 547.9 999.5 550.7 1000.6 553.7C1001.8 556.6 1002.4 560.3 1002.6 564.4C1002.8 568.4 1002.7 573.3 1002.0 577.8C1001.3 582.3 1000.3 587.0 998.5 591.3C996.8 595.7 994.4 600.2 991.5 604.0C988.7 607.8 984.6 611.3 981.4 614.1C978.1 617.0 974.9 619.6 972.1 621.1C969.2 622.5 966.5 622.7 964.1 622.9C961.7 623.0 958.7 622.2 957.6 622.1" fill="none" stroke="#53c4a2" stroke-width="2.1" stroke-linejoin="round" />
<path d="M985.1 548.0C983.7 551.5 979.4 561.4 976.9 568.8C974.5 576.3 972.1 585.3 970.4 592.6C968.7 600.0 967.2 607.7 966.6 612.9C966.0 618.1 966.6 622.1 966.6 623.9" fill="none" stroke="#53c4a2" stroke-width="2.1" stroke-linejoin="round" />
<path d="M1004.8 558.9C1005.6 558.4 1008.3 556.4 1010.0 556.2C1011.7 555.9 1013.5 556.1 1015.1 557.5C1016.7 558.9 1018.6 561.5 1019.7 564.4C1020.7 567.2 1021.3 570.8 1021.5 574.7C1021.7 578.5 1021.6 583.2 1020.9 587.6C1020.3 591.9 1019.2 596.4 1017.6 600.6C1015.9 604.8 1013.5 609.1 1010.8 612.7C1008.0 616.3 1004.1 619.7 1001.0 622.4C997.9 625.1 994.8 627.7 992.0 629.1C989.3 630.5 986.7 630.6 984.3 630.8C982.0 630.9 979.2 630.1 978.2 630.0" fill="none" stroke="#53c4a2" stroke-width="2.1" stroke-linejoin="round" />
<path d="M1004.8 558.9C1003.4 562.2 999.2 571.8 996.9 578.9C994.5 586.0 992.2 594.7 990.5 601.7C988.8 608.8 987.4 616.2 986.8 621.2C986.2 626.2 986.8 630.0 986.8 631.8" fill="none" stroke="#53c4a2" stroke-width="2.1" stroke-linejoin="round" />
<path d="M1024.4 569.8C1025.2 569.4 1027.8 567.4 1029.5 567.2C1031.1 567.0 1032.8 567.2 1034.4 568.5C1035.9 569.8 1037.7 572.4 1038.7 575.1C1039.8 577.9 1040.3 581.3 1040.5 585.0C1040.7 588.7 1040.5 593.3 1039.9 597.4C1039.3 601.6 1038.3 605.9 1036.6 609.9C1035.0 614.0 1032.8 618.1 1030.1 621.6C1027.4 625.1 1023.7 628.3 1020.7 630.9C1017.7 633.5 1014.7 636.0 1012.0 637.3C1009.4 638.6 1006.8 638.8 1004.6 638.9C1002.4 639.0 999.7 638.3 998.7 638.1" fill="none" stroke="#53c4a2" stroke-width="2.1" stroke-linejoin="round" />
<path d="M1024.4 569.8C1023.1 573.0 1019.1 582.2 1016.8 589.0C1014.5 595.9 1012.2 604.2 1010.6 611.0C1009.0 617.8 1007.6 624.9 1007.0 629.7C1006.4 634.5 1007.0 638.2 1007.0 639.9" fill="none" stroke="#53c4a2" stroke-width="2.1" stroke-linejoin="round" />
<path d="M1044.1 580.7C1044.9 580.3 1047.3 578.4 1048.9 578.2C1050.5 578.0 1052.1 578.2 1053.6 579.5C1055.1 580.7 1056.8 583.2 1057.8 585.9C1058.8 588.5 1059.3 591.8 1059.5 595.4C1059.7 598.9 1059.5 603.3 1058.9 607.3C1058.2 611.3 1057.3 615.4 1055.7 619.3C1054.1 623.1 1052.0 627.1 1049.4 630.5C1046.9 633.8 1043.2 636.9 1040.3 639.4C1037.4 641.9 1034.6 644.2 1032.0 645.5C1029.5 646.8 1027.0 646.9 1024.9 647.0C1022.8 647.2 1020.2 646.4 1019.2 646.3" fill="none" stroke="#53c4a2" stroke-width="2.1" stroke-linejoin="round" />
<path d="M1044.1 580.7C1042.8 583.8 1038.9 592.6 1036.7 599.2C1034.5 605.8 1032.3 613.7 1030.7 620.2C1029.1 626.8 1027.8 633.6 1027.2 638.2C1026.6 642.8 1027.2 646.4 1027.2 648.0" fill="none" stroke="#53c4a2" stroke-width="2.1" stroke-linejoin="round" />
<path d="M1063.7 591.6C1064.5 591.2 1066.8 589.4 1068.4 589.3C1069.9 589.1 1071.5 589.2 1072.9 590.5C1074.3 591.7 1075.9 594.0 1076.9 596.6C1077.8 599.1 1078.3 602.3 1078.5 605.7C1078.6 609.1 1078.5 613.3 1077.9 617.1C1077.2 621.0 1076.3 624.9 1074.8 628.6C1073.3 632.3 1071.2 636.1 1068.7 639.3C1066.3 642.5 1062.8 645.5 1060.0 647.9C1057.2 650.3 1054.5 652.5 1052.0 653.7C1049.5 654.9 1047.2 655.0 1045.2 655.2C1043.2 655.3 1040.7 654.6 1039.8 654.4" fill="none" stroke="#53c4a2" stroke-width="2.1" stroke-linejoin="round" />
<path d="M1063.7 591.6C1062.5 594.6 1058.7 603.0 1056.6 609.3C1054.4 615.6 1052.3 623.3 1050.8 629.5C1049.3 635.7 1048.0 642.3 1047.4 646.7C1046.9 651.1 1047.4 654.5 1047.4 656.1" fill="none" stroke="#53c4a2" stroke-width="2.1" stroke-linejoin="round" />
<path d="M864 474.0 L1083 596.9" fill="none" stroke="#53c4a2" stroke-width="2.1" stroke-linejoin="round" />
<path d="M758.4 576.0C767.3 577.3 795.4 581.6 812.0 583.7C828.6 585.8 840.0 585.2 858.0 588.8C876.0 592.3 901.2 598.8 920.0 605.0C938.8 611.2 952.2 618.3 970.5 626.0C988.8 633.7 1011.6 643.5 1030.0 651.0C1048.4 658.5 1070.0 667.0 1081.0 671.0C1092.0 675.0 1093.5 674.3 1096.0 675.0" fill="none" stroke="#53c4a2" stroke-width="2.1" stroke-linejoin="round" />
<path d="M790.0 574.0C800.0 575.3 830.0 578.0 850.0 582.0C870.0 586.0 890.0 591.7 910.0 598.0C930.0 604.3 948.3 611.7 970.0 620.0C991.7 628.3 1020.8 640.7 1040.0 648.0C1059.2 655.3 1077.5 661.3 1085.0 664.0" fill="none" stroke="#53c4a2" stroke-width="2.1" stroke-linejoin="round" />
<path d="M750.7 477.7C753.5 472.2 758.6 473.1 765.0 471.0C771.4 468.9 779.8 466.6 789.0 465.4C798.2 464.2 809.7 462.8 820.0 463.8C830.3 464.8 840.5 467.4 850.7 471.5C860.9 475.6 872.4 481.7 881.4 488.4C890.4 495.1 899.9 504.6 904.5 511.5C909.1 518.4 910.3 522.3 909.0 530.0C907.7 537.7 902.7 550.4 896.8 557.6C890.9 564.8 882.7 569.4 873.7 573.0C864.7 576.6 853.3 577.8 843.0 579.5C832.7 581.2 822.8 583.1 812.0 583.0C801.2 582.9 786.9 580.2 778.0 579.0C769.1 577.8 764.7 577.3 758.4 576.0C752.1 574.7 744.0 573.9 740.0 571.4C736.0 568.9 734.9 564.3 734.6 560.7C734.3 557.1 736.2 555.6 738.4 550.0C740.6 544.4 746.0 534.7 747.7 527.0C749.4 519.3 747.9 512.0 748.4 503.8C748.9 495.6 747.9 483.2 750.7 477.7Z" fill="none" stroke="#53c4a2" stroke-width="2.1" stroke-linejoin="round" />
<path d="M753.8 500.7C755.0 498.8 757.7 492.3 761.0 489.0C764.3 485.7 769.0 483.0 773.8 480.7C778.6 478.4 783.6 476.5 790.0 475.0C796.4 473.5 803.2 471.8 812.0 471.5C820.8 471.2 834.0 471.5 843.0 473.0C852.0 474.5 858.2 476.7 866.0 480.7C873.8 484.7 884.0 490.4 890.0 497.0C896.0 503.6 900.5 512.0 902.0 520.0C903.5 528.0 902.7 537.5 899.0 545.0C895.3 552.5 888.2 559.8 880.0 565.0C871.8 570.2 855.0 574.2 850.0 576.0" fill="none" stroke="#53c4a2" stroke-width="2.1" stroke-linejoin="round" />
<path d="M887.4 522.4C887.6 525.2 887.2 528.2 886.3 531.1C885.4 534.0 883.9 536.9 882.0 539.6C880.1 542.3 877.7 544.9 874.9 547.3C872.1 549.7 868.8 552.0 865.3 554.0C861.7 556.0 857.7 557.8 853.6 559.2C849.4 560.7 844.9 561.9 840.4 562.8C835.9 563.6 831.1 564.2 826.4 564.5C821.8 564.7 817.0 564.6 812.4 564.2C807.8 563.8 803.2 563.0 799.0 562.0C794.7 560.9 790.5 559.5 786.8 557.9C783.1 556.3 779.5 554.4 776.5 552.2C773.5 550.1 770.8 547.7 768.7 545.2C766.5 542.7 764.8 540.0 763.6 537.2C762.4 534.5 761.7 531.5 761.6 528.6C761.4 525.8 761.8 522.8 762.7 519.9C763.6 517.0 765.1 514.1 767.0 511.4C768.9 508.7 771.3 506.1 774.1 503.7C776.9 501.3 780.2 499.0 783.7 497.0C787.3 495.0 791.3 493.2 795.4 491.8C799.6 490.3 804.1 489.1 808.6 488.2C813.1 487.4 817.9 486.8 822.6 486.5C827.2 486.3 832.0 486.4 836.6 486.8C841.2 487.2 845.8 488.0 850.0 489.0C854.3 490.1 858.5 491.5 862.2 493.1C865.9 494.7 869.5 496.6 872.5 498.8C875.5 500.9 878.2 503.3 880.3 505.8C882.5 508.3 884.2 511.0 885.4 513.8C886.6 516.5 887.3 519.5 887.4 522.4Z" fill="none" stroke="#53c4a2" stroke-width="2.1" stroke-linejoin="round" />
<path d="M760.0 522.0C762.5 519.7 769.2 511.8 775.0 508.0C780.8 504.2 788.3 501.7 795.0 499.0C801.7 496.3 807.8 494.0 815.0 492.0C822.2 490.0 829.5 488.2 838.0 487.0C846.5 485.8 861.3 485.3 866.0 485.0" fill="none" stroke="#53c4a2" stroke-width="2.1" stroke-linejoin="round" />
<path d="M748.0 526.0C749.7 525.7 755.7 526.7 758.0 524.0C760.3 521.3 758.3 514.3 762.0 510.0C765.7 505.7 773.7 501.3 780.0 498.0C786.3 494.7 794.2 492.2 800.0 490.0C805.8 487.8 812.5 485.8 815.0 485.0" fill="none" stroke="#53c4a2" stroke-width="2.1" stroke-linejoin="round" />
<path d="M863.0 485.0C861.2 489.2 855.3 500.8 852.0 510.0C848.7 519.2 845.8 530.8 843.0 540.0C840.2 549.2 837.0 558.3 835.0 565.0C833.0 571.7 831.7 577.5 831.0 580.0" fill="none" stroke="#53c4a2" stroke-width="2.1" stroke-linejoin="round" />
<path d="M881.0 499.0C878.8 503.3 871.5 515.7 868.0 525.0C864.5 534.3 861.8 545.3 860.0 555.0C858.2 564.7 857.5 578.3 857.0 583.0" fill="none" stroke="#53c4a2" stroke-width="2.1" stroke-linejoin="round" />
<path d="M747.7 540.7C750.6 540.8 758.6 541.0 765.0 541.5C771.4 542.0 780.7 542.4 786.0 543.8C791.3 545.2 792.6 547.1 796.9 550.0C801.2 552.9 807.1 557.4 812.0 561.0C816.9 564.6 824.3 567.9 826.0 571.4C827.7 574.9 822.7 580.2 822.0 582.0" fill="none" stroke="#53c4a2" stroke-width="2.1" stroke-linejoin="round" />
<path d="M798.4 556.0C800.3 556.9 806.4 560.0 810.0 561.5C813.6 563.0 818.3 564.4 820.0 565.0" fill="none" stroke="#53c4a2" stroke-width="2.1" stroke-linejoin="round" />
<path d="M751.0 478.0C752.5 477.7 759.2 474.7 760.0 476.0C760.8 477.3 757.5 482.5 756.0 486.0C754.5 489.5 751.8 495.2 751.0 497.0" fill="none" stroke="#53c4a2" stroke-width="2.1" stroke-linejoin="round" />
<path d="M1085 530 L1140 530 L1140 657 A27.5 15 0 0 1 1085 657 Z" fill="url(#gBlue)" />
<path d="M1085.5 520 L1139.5 520 L1139.5 538 A27 15 0 0 1 1085.5 538 Z" fill="url(#gCol)" />
<path d="M998.5 250 L1220.5 250 L1220.5 465 A111 66 0 0 1 998.5 465 Z" fill="url(#gShank)" />
<path d="M886 118 L1328 118 L1328 150 A221 136 0 0 1 886 150 Z" fill="url(#gHold)" />
</svg>
<div class="r" style="left:0px;top:0px;width:1920px;height:30px;background:#f3f3f3;"></div>
<div class="r" style="left:0px;top:30px;width:1920px;height:1px;background:#9a9a9a;"></div>
<div class="r" style="left:0px;top:31px;width:1920px;height:86px;background:#f4f4f4;"></div>
<div class="r" style="left:0px;top:117px;width:176px;height:1px;background:#8a8a8a;"></div>
<div class="r" style="left:302px;top:117px;width:1618px;height:1px;background:#7c7c7c;"></div>
<div class="r" style="left:10px;top:0px;width:145px;height:34px;background:linear-gradient(160deg,#ffffff 0%,#fafafa 45%,#e9e9e9 75%,#dedede 100%);border:1px solid #9d9d9d;border-top:none;box-sizing:border-box;box-shadow:0 0 1px #ccc;"></div>
<div class="t" style="left:183.00px;top:8.06px;font-size:10.4px;color:#000;letter-spacing:0.311px;">File</div>
<div class="t" style="left:217.00px;top:8.06px;font-size:10.4px;color:#000;letter-spacing:0.520px;">Edit</div>
<div class="t" style="left:253.00px;top:8.06px;font-size:10.4px;color:#000;letter-spacing:0.662px;">View</div>
<div class="t" style="left:293.00px;top:8.06px;font-size:10.4px;color:#000;letter-spacing:0.665px;">Insert</div>
<div class="t" style="left:338.00px;top:8.06px;font-size:10.4px;color:#000;letter-spacing:0.745px;">Tools</div>
<div class="t" style="left:382.00px;top:8.06px;font-size:10.4px;color:#000;letter-spacing:1.169px;">Window</div>
<div class="t" style="left:442.00px;top:8.06px;font-size:10.4px;color:#000;letter-spacing:0.653px;">Help</div>
<div class="r" style="left:515px;top:1px;width:1px;height:28px;background:#b5b5b5;"></div>
<div class="r" style="left:516px;top:1px;width:1px;height:28px;background:#fdfdfd;"></div>
<div class="t" style="left:1076.00px;top:8.06px;font-size:10.4px;color:#000;letter-spacing:0.307px;">latest revision backup.SLDPRT *</div>
<div class="t" style="left:1461.50px;top:8.06px;font-size:10.4px;color:#000;letter-spacing:0.265px;">Give Beta Feedback</div>
<div class="r" style="left:1571px;top:4px;width:202px;height:23px;background:#eeeef3;border:1px solid #222;box-sizing:border-box;"></div>
<div class="t" style="left:1598.50px;top:8.06px;font-size:10.4px;color:#666674;letter-spacing:0.333px;">Search Commands</div>
<div class="r" style="left:61px;top:36px;width:1px;height:78px;background:#c6c6c6;"></div>
<div class="r" style="left:62px;top:36px;width:1px;height:78px;background:#fcfcfc;"></div>
<div class="r" style="left:212px;top:36px;width:1px;height:78px;background:#c6c6c6;"></div>
<div class="r" style="left:213px;top:36px;width:1px;height:78px;background:#fcfcfc;"></div>
<div class="r" style="left:645px;top:36px;width:1px;height:78px;background:#c6c6c6;"></div>
<div class="r" style="left:646px;top:36px;width:1px;height:78px;background:#fcfcfc;"></div>
<div class="r" style="left:716px;top:36px;width:1px;height:78px;background:#c6c6c6;"></div>
<div class="r" style="left:717px;top:36px;width:1px;height:78px;background:#fcfcfc;"></div>
<div class="r" style="left:1103px;top:36px;width:1px;height:78px;background:#c6c6c6;"></div>
<div class="r" style="left:1104px;top:36px;width:1px;height:78px;background:#fcfcfc;"></div>
<div class="r" style="left:1167px;top:36px;width:1px;height:78px;background:#c6c6c6;"></div>
<div class="r" style="left:1168px;top:36px;width:1px;height:78px;background:#fcfcfc;"></div>
<div class="r" style="left:1235px;top:36px;width:1px;height:78px;background:#c6c6c6;"></div>
<div class="r" style="left:1236px;top:36px;width:1px;height:78px;background:#fcfcfc;"></div>
<div class="r" style="left:1386px;top:36px;width:1px;height:78px;background:#c6c6c6;"></div>
<div class="r" style="left:1387px;top:36px;width:1px;height:78px;background:#fcfcfc;"></div>
<div class="r" style="left:1558px;top:36px;width:1px;height:78px;background:#c6c6c6;"></div>
<div class="r" style="left:1559px;top:36px;width:1px;height:78px;background:#fcfcfc;"></div>
<div class="r" style="left:1706px;top:36px;width:1px;height:78px;background:#c6c6c6;"></div>
<div class="r" style="left:1707px;top:36px;width:1px;height:78px;background:#fcfcfc;"></div>
<div class="r" style="left:1823px;top:36px;width:1px;height:78px;background:#c6c6c6;"></div>
<div class="r" style="left:1824px;top:36px;width:1px;height:78px;background:#fcfcfc;"></div>
<div class="t" style="left:16.55px;top:68.56px;font-size:10.4px;color:#b9b9b9;letter-spacing:0.573px;">Define</div>
<div class="t" style="left:11.55px;top:81.56px;font-size:10.4px;color:#b9b9b9;letter-spacing:0.599px;">Machine</div>
<div class="t" style="left:91.50px;top:42.56px;font-size:10.4px;color:#b9b9b9;letter-spacing:0.386px;">Coordinate System</div>
<div class="t" style="left:91.30px;top:68.56px;font-size:10.4px;color:#b9b9b9;letter-spacing:0.543px;">Stock Manager</div>
<div class="t" style="left:91.30px;top:94.56px;font-size:10.4px;color:#b9b9b9;letter-spacing:0.365px;">Setup</div>
<div class="t" style="left:232.50px;top:68.56px;font-size:10.4px;color:#b9b9b9;letter-spacing:0.091px;">Extract</div>
<div class="t" style="left:219.25px;top:81.56px;font-size:10.4px;color:#b9b9b9;letter-spacing:0.632px;">Machinable</div>
<div class="t" style="left:227.25px;top:94.56px;font-size:10.4px;color:#b9b9b9;letter-spacing:0.308px;">Features</div>
<div class="t" style="left:292.30px;top:68.56px;font-size:10.4px;color:#b9b9b9;letter-spacing:0.330px;">Generate</div>
<div class="t" style="left:289.30px;top:81.56px;font-size:10.4px;color:#b9b9b9;letter-spacing:0.703px;">Operation</div>
<div class="t" style="left:304.55px;top:94.56px;font-size:10.4px;color:#b9b9b9;letter-spacing:0.171px;">Plan</div>
<div class="t" style="left:352.30px;top:68.56px;font-size:10.4px;color:#b9b9b9;letter-spacing:0.330px;">Generate</div>
<div class="t" style="left:353.05px;top:81.56px;font-size:10.4px;color:#b9b9b9;letter-spacing:0.648px;">Toolpath</div>
<div class="t" style="left:410.55px;top:68.56px;font-size:10.4px;color:#b9b9b9;letter-spacing:0.380px;">Simulate</div>
<div class="t" style="left:410.05px;top:81.56px;font-size:10.4px;color:#b9b9b9;letter-spacing:0.648px;">Toolpath</div>
<div class="t" style="left:488.50px;top:42.56px;font-size:10.4px;color:#b9b9b9;letter-spacing:0.528px;">Step Thru Toolpath</div>
<div class="t" style="left:488.50px;top:68.56px;font-size:10.4px;color:#b9b9b9;letter-spacing:-0.054px;">Save CL File</div>
<div class="t" style="left:488.50px;top:94.56px;font-size:10.4px;color:#b9b9b9;letter-spacing:0.368px;">Auto-Size Stock</div>
<div class="t" style="left:609.55px;top:68.56px;font-size:10.4px;color:#b9b9b9;letter-spacing:0.173px;">Post</div>
<div class="t" style="left:601.55px;top:81.56px;font-size:10.4px;color:#b9b9b9;letter-spacing:-0.010px;">Process</div>
<div class="t" style="left:671.05px;top:68.56px;font-size:10.4px;color:#b9b9b9;letter-spacing:0.357px;">Sort</div>
<div class="t" style="left:653.05px;top:81.56px;font-size:10.4px;color:#b9b9b9;letter-spacing:0.563px;">Operations</div>
<div class="t" style="left:723.45px;top:61.56px;font-size:10.4px;color:#b9b9b9;letter-spacing:0.380px;">Feature</div>
<div class="t" style="left:782.20px;top:68.56px;font-size:10.4px;color:#b9b9b9;letter-spacing:0.198px;">2.5 Axis</div>
<div class="t" style="left:791.95px;top:81.56px;font-size:10.4px;color:#b9b9b9;letter-spacing:0.726px;">Mill</div>
<div class="t" style="left:772.95px;top:94.56px;font-size:10.4px;color:#b9b9b9;letter-spacing:0.563px;">Operations</div>
<div class="t" style="left:857.70px;top:68.56px;font-size:10.4px;color:#b9b9b9;letter-spacing:0.403px;">Hole</div>
<div class="t" style="left:842.20px;top:81.56px;font-size:10.4px;color:#b9b9b9;letter-spacing:0.733px;">Machining</div>
<div class="t" style="left:840.95px;top:94.56px;font-size:10.4px;color:#b9b9b9;letter-spacing:0.563px;">Operations</div>
<div class="t" style="left:911.70px;top:68.56px;font-size:10.4px;color:#b9b9b9;letter-spacing:0.434px;">3 Axis Mill</div>
<div class="t" style="left:908.95px;top:81.56px;font-size:10.4px;color:#b9b9b9;letter-spacing:0.563px;">Operations</div>
<div class="t" style="left:994.45px;top:61.56px;font-size:10.4px;color:#b9b9b9;letter-spacing:0.126px;">Turn</div>
<div class="t" style="left:976.95px;top:74.56px;font-size:10.4px;color:#b9b9b9;letter-spacing:0.563px;">Operations</div>
<div class="t" style="left:1059.05px;top:68.56px;font-size:10.4px;color:#b9b9b9;letter-spacing:-0.301px;">Save</div>
<div class="t" style="left:1044.80px;top:81.56px;font-size:10.4px;color:#b9b9b9;letter-spacing:0.592px;">Operation</div>
<div class="t" style="left:1060.05px;top:94.56px;font-size:10.4px;color:#b9b9b9;letter-spacing:-0.079px;">Plan</div>
<div class="t" style="left:1116.55px;top:68.56px;font-size:10.4px;color:#b9b9b9;letter-spacing:0.650px;">Default</div>
<div class="t" style="left:1116.30px;top:81.56px;font-size:10.4px;color:#b9b9b9;letter-spacing:0.309px;">Feature</div>
<div class="t" style="left:1110.55px;top:94.56px;font-size:10.4px;color:#b9b9b9;letter-spacing:0.268px;">Strategies</div>
<div class="t" style="left:1177.05px;top:68.56px;font-size:10.4px;color:#000;letter-spacing:0.379px;">Tolerance</div>
<div class="t" style="left:1186.05px;top:81.56px;font-size:10.4px;color:#000;letter-spacing:0.203px;">Based</div>
<div class="t" style="left:1174.30px;top:94.56px;font-size:10.4px;color:#000;letter-spacing:0.733px;">Machining</div>
<div class="t" style="left:1265.00px;top:42.56px;font-size:10.4px;color:#000;letter-spacing:0.499px;">Technology Database</div>
<div class="t" style="left:1265.00px;top:68.56px;font-size:10.4px;color:#000;letter-spacing:0.709px;">Message Window</div>
<div class="t" style="left:1265.00px;top:94.56px;font-size:10.4px;color:#b9b9b9;letter-spacing:0.333px;">Process Manager</div>
<div class="t" style="left:1416.50px;top:42.56px;font-size:10.4px;color:#b9b9b9;letter-spacing:0.604px;">User Defined Tool/Holder</div>
<div class="t" style="left:1588.00px;top:42.56px;font-size:10.4px;color:#b9b9b9;letter-spacing:0.436px;">Create Library Object</div>
<div class="t" style="left:1588.00px;top:68.56px;font-size:10.4px;color:#b9b9b9;letter-spacing:0.494px;">Insert Library Object</div>
<div class="t" style="left:1588.00px;top:94.56px;font-size:10.4px;color:#b9b9b9;letter-spacing:0.683px;">Publish e-Drawing</div>
<div class="t" style="left:1713.50px;top:68.56px;font-size:10.4px;color:#b9b9b9;letter-spacing:-0.150px;">SOLIDWORKS</div>
<div class="t" style="left:1714.00px;top:81.56px;font-size:10.4px;color:#b9b9b9;letter-spacing:0.560px;">CAM Options</div>
<div class="t" style="left:1793.50px;top:68.56px;font-size:10.4px;color:#000;letter-spacing:0.403px;">Help</div>
<div class="t" style="left:1834.70px;top:68.56px;font-size:10.4px;color:#000;letter-spacing:0.324px;">Request</div>
<div class="t" style="left:1844.45px;top:81.56px;font-size:10.4px;color:#000;letter-spacing:0.173px;">Post</div>
<div class="t" style="left:1830.45px;top:94.56px;font-size:10.4px;color:#000;letter-spacing:0.427px;">processor</div>
<div class="r" style="left:0px;top:118px;width:176px;height:21px;background:#d4d4d4;"></div>
<div class="r" style="left:0px;top:139px;width:176px;height:1px;background:#8e8e8e;"></div>
<div class="r" style="left:59px;top:118px;width:1px;height:21px;background:#9a9a9a;"></div>
<div class="r" style="left:60px;top:118px;width:1px;height:21px;background:#e0e0e0;"></div>
<div class="r" style="left:115px;top:118px;width:1px;height:21px;background:#9a9a9a;"></div>
<div class="r" style="left:116px;top:118px;width:1px;height:21px;background:#e0e0e0;"></div>
<div class="r" style="left:175px;top:118px;width:1px;height:21px;background:#9a9a9a;"></div>
<div class="r" style="left:176px;top:118px;width:1px;height:21px;background:#e0e0e0;"></div>
<div class="r" style="left:176px;top:117px;width:126px;height:22px;background:#f5f5f5;"></div>
<div class="r" style="left:302px;top:117px;width:1px;height:23px;background:#7c7c7c;"></div>
<div class="r" style="left:176px;top:139px;width:127px;height:1px;background:#8a8a8a;"></div>
<div class="t" style="left:8.00px;top:120.64px;font-size:11.6px;color:#1a1a1a;letter-spacing:-0.222px;">Features</div>
<div class="t" style="left:70.50px;top:120.64px;font-size:11.6px;color:#1a1a1a;letter-spacing:-0.244px;">Sketch</div>
<div class="t" style="left:124.50px;top:120.64px;font-size:11.6px;color:#1a1a1a;letter-spacing:-0.205px;">Evaluate</div>
<div class="t" style="left:184.00px;top:120.64px;font-size:11.6px;color:#2a2a2a;letter-spacing:-0.111px;font-weight:bold;">SOLIDWORKS CAM</div>
<div class="t" style="left:49.00px;top:147.51px;font-size:12px;color:#000;letter-spacing:-0.071px;">latest revision backup  (M...</div>
<div class="r" style="left:0px;top:542px;width:8px;height:39px;background:#f5f5f5;border:1px solid #6e6e6e;border-left:none;box-sizing:border-box;"></div>
<div class="r" style="left:1px;top:558.5px;width:4.5px;height:5px;background:#b8b8b8;border-radius:50%;"></div>
<div class="r" style="left:0px;top:1006px;width:1920px;height:16px;background:#f5f5f5;"></div>
<div class="r" style="left:0px;top:1006px;width:1920px;height:1px;background:#8e8e8e;"></div>
<div class="r" style="left:0px;top:1021px;width:1920px;height:1px;background:#8e8e8e;"></div>
<div class="r" style="left:1918px;top:1006px;width:1px;height:16px;background:#b0b0b0;"></div>
<div class="r" style="left:0px;top:1007px;width:2px;height:14px;background:#9aa0a0;"></div>
<div class="r" style="left:2px;top:1007px;width:65px;height:14px;background:#b7b7b7;"></div>
<div class="r" style="left:2px;top:1006px;width:65px;height:1px;background:#444;"></div>
<div class="r" style="left:17px;top:1007px;width:1px;height:14px;background:#a8a8a8;"></div>
<div class="r" style="left:18px;top:1007px;width:1px;height:14px;background:#c4c4c4;"></div>
<div class="r" style="left:33px;top:1007px;width:1px;height:14px;background:#a8a8a8;"></div>
<div class="r" style="left:34px;top:1007px;width:1px;height:14px;background:#c4c4c4;"></div>
<div class="r" style="left:49px;top:1007px;width:1px;height:14px;background:#a8a8a8;"></div>
<div class="r" style="left:50px;top:1007px;width:1px;height:14px;background:#c4c4c4;"></div>
<div class="r" style="left:67px;top:1006px;width:57px;height:15px;background:#ffffff;"></div>
<div class="r" style="left:123px;top:1007px;width:1px;height:14px;background:#9a9a9a;"></div>
<div class="r" style="left:124px;top:1007px;width:176px;height:14px;background:#d2d2d2;"></div>
<div class="r" style="left:191px;top:1007px;width:1px;height:14px;background:#9a9a9a;"></div>
<div class="r" style="left:299px;top:1007px;width:1px;height:14px;background:#9a9a9a;"></div>
<div class="t" style="left:79.50px;top:1005.21px;font-size:12px;color:#000;letter-spacing:0.068px;font-weight:bold;">Model</div>
<div class="t" style="left:134.00px;top:1005.21px;font-size:12px;color:#1a1a1a;letter-spacing:-0.433px;">3D Views</div>
<div class="t" style="left:201.00px;top:1005.21px;font-size:12px;color:#1a1a1a;letter-spacing:-0.003px;">Motion Study 1</div>
<div class="r" style="left:0px;top:1022px;width:1920px;height:19px;background:#f4f4f4;"></div>
<div class="r" style="left:0px;top:1040px;width:1920px;height:1px;background:#4a4a4a;"></div>
<div class="t" style="left:1.00px;top:1023.78px;font-size:11.2px;color:#000;letter-spacing:0.018px;">SOLIDWORKS Premium 2018 x64 Edition</div>
<div class="t" style="left:1659.00px;top:1023.78px;font-size:11.2px;color:#000;letter-spacing:0.259px;">Editing Part</div>
<div class="t" style="left:1784.00px;top:1023.78px;font-size:11.2px;color:#a8a8a8;letter-spacing:-0.684px;">IPS</div>
<div class="r" style="left:1647px;top:1024px;width:1px;height:15px;background:#d5d5d5;"></div>
<div class="r" style="left:1655px;top:1024px;width:1px;height:15px;background:#d5d5d5;"></div>
<div class="r" style="left:1726px;top:1024px;width:1px;height:15px;background:#d5d5d5;"></div>
<div class="r" style="left:1742px;top:1024px;width:1px;height:15px;background:#d5d5d5;"></div>
<div class="r" style="left:1894px;top:169px;width:26px;height:144px;background:#d0d0d0;border:1px solid #8c8c8c;border-right:none;box-sizing:border-box;"></div>
<div class="r" style="left:1895px;top:192px;width:25px;height:1px;background:#9a9a9a;"></div>
<div class="r" style="left:1895px;top:216px;width:25px;height:1px;background:#9a9a9a;"></div>
<div class="r" style="left:1895px;top:240px;width:25px;height:1px;background:#9a9a9a;"></div>
<div class="r" style="left:1895px;top:264px;width:25px;height:1px;background:#9a9a9a;"></div>
<div class="r" style="left:1895px;top:288px;width:25px;height:1px;background:#9a9a9a;"></div>
<svg width="1920" height="1041" viewBox="0 0 1920 1041">
<g fill="none" stroke="#da291c" stroke-linecap="round" stroke-linejoin="round"><path d="M25 2.2 C30 1.5 36 2.2 36.5 5 C37 8 30 10.5 27.5 11.2" stroke-width="2.3"/><path d="M22.5 13.5 L27 13.5 C30 14 30.5 17 28 20 C25 23.5 20.5 26 16.5 27.2 L22.5 13.5" stroke-width="2.3"/><path d="M43 10.8 L37 11 C33.5 11.3 32.5 13.5 35 15.8 L39.5 19.8 C41.5 21.8 40.5 23.8 37.5 24 L30.5 24.2" stroke-width="2.5"/></g>
<text x="48.3" y="25" font-size="14.6" font-style="italic" fill="#da291c"><tspan font-weight="bold" letter-spacing="-0.55" textLength="48" lengthAdjust="spacingAndGlyphs">SOLID</tspan></text>
<text x="96.6" y="25" font-size="14.6" font-style="italic" fill="#da291c" textLength="52" lengthAdjust="spacingAndGlyphs">WORKS</text>
<g transform="translate(499 16) rotate(45)"><path d="M-2.2 -7 L2.2 -7 L2.2 -6 L1.6 -5.2 L1.6 -1.5 L3.6 0.5 L3.6 1.8 L0.5 1.8 L0.5 7 L0 8.5 L-0.5 7 L-0.5 1.8 L-3.6 1.8 L-3.6 0.5 L-1.6 -1.5 L-1.6 -5.2 L-2.2 -6 Z" fill="#2e8cc2"/></g>
<g fill="none" stroke="#c4c4c4" stroke-width="1.3"><path d="M533.5 15.5 L541.5 7.8 L549.5 15.5"/><path d="M535.5 14.5 L535.5 23.5 L547.5 23.5 L547.5 14.5"/><path d="M539.7 23.5 L539.7 18 L543.5 18 L543.5 23.5"/></g>
<path d="M560.5 7.5 L570 7.5 L573.5 11 L573.5 24 L560.5 24 Z" fill="#ececec" stroke="#c4c4c4" stroke-width="1"/><path d="M570 7.5 L570 11 L573.5 11" fill="none" stroke="#c4c4c4"/>
<path d="M583.5 14.0 L588.5 14.0 L586 17.5 Z" fill="#8a8a8a"/>
<path d="M597 9 L603 9 L605 11 L613 11 L613 13.5 L615.5 13.5 L612 24 L597 24 Z" fill="#ececec" stroke="#c4c4c4" stroke-width="1"/><path d="M604 8 L608 8 L608 12 M606 13.5 L608 11.5 L610 13.5" fill="none" stroke="#c4c4c4"/>
<path d="M623.0 14.0 L628.0 14.0 L625.5 17.5 Z" fill="#8a8a8a"/>
<rect x="637" y="7.5" width="16" height="16.5" rx="1" fill="#dedede" stroke="#c4c4c4"/><rect x="640" y="8" width="10" height="7" fill="#ececec" stroke="#c4c4c4" stroke-width="0.6"/><rect x="641" y="18.5" width="8" height="5" fill="#d2d2d2"/>
<path d="M662.0 14.0 L667.0 14.0 L664.5 17.5 Z" fill="#8a8a8a"/>
<rect x="678.5" y="7.5" width="11" height="7" fill="#f4f4f4" stroke="#333" stroke-width="1"/><rect x="675.5" y="14" width="17" height="7" rx="1.5" fill="#2a8cc4" stroke="#0e3a5c" stroke-width="1"/><rect x="676.5" y="14.8" width="15" height="2" fill="#8fd0f0"/><rect x="677.5" y="19.5" width="13" height="4" fill="#fafafa" stroke="#222" stroke-width="0.9"/><rect x="678" y="18.2" width="12" height="1.2" fill="#0a3050"/>
<path d="M701.0 14.0 L706.0 14.0 L703.5 17.5 Z" fill="#222"/>
<path d="M716 9.5 L716 16 L722.5 16 L720.2 13.8 C724 12.5 727.5 14.5 728 18 C728.3 20.5 727.5 22 726.5 23.2 L729.5 23.2 C731.5 20.5 731.5 16.5 729.5 13.5 C727 10 722 9.5 718.5 11.8 Z" fill="#dedede" stroke="#c4c4c4" stroke-width="0.8"/>
<path d="M740.0 14.0 L745.0 14.0 L742.5 17.5 Z" fill="#8a8a8a"/>
<path d="M756.5 6.5 L756.5 21.5 L760 18.5 L762.5 23.5 L764.5 22.5 L762.2 17.8 L767 17.8 Z" fill="#ececec" stroke="#c4c4c4" stroke-width="1"/>
<path d="M779.0 14.0 L784.0 14.0 L781.5 17.5 Z" fill="#8a8a8a"/>
<rect x="797.5" y="7.5" width="9" height="16.5" rx="4.5" fill="#d0d0d0" stroke="#c4c4c4"/><circle cx="802" cy="12" r="1.6" fill="#e2e2e2"/><circle cx="802" cy="19.5" r="1.6" fill="#e2e2e2"/>
<rect x="820.5" y="7.5" width="15" height="16.5" fill="#ececec" stroke="#c4c4c4"/><g fill="none" stroke="#c4c4c4" stroke-width="0.9"><rect x="822.5" y="9.5" width="3.5" height="3"/><rect x="822.5" y="14.2" width="3.5" height="3"/><rect x="822.5" y="19" width="3.5" height="3"/><path d="M828 11 L833.5 11 M828 15.7 L833.5 15.7 M828 20.5 L833.5 20.5"/></g>
<path d="M860.57 16.46 L860.25 18.09 L858.00 18.53 L857.44 19.38 L857.89 21.62 L856.50 22.54 L854.61 21.27 L853.61 21.47 L852.34 23.37 L850.71 23.05 L850.27 20.80 L849.42 20.24 L847.18 20.69 L846.26 19.30 L847.53 17.41 L847.33 16.41 L845.43 15.14 L845.75 13.51 L848.00 13.07 L848.56 12.22 L848.11 9.98 L849.50 9.06 L851.39 10.33 L852.39 10.13 L853.66 8.23 L855.29 8.55 L855.73 10.80 L856.58 11.36 L858.82 10.91 L859.74 12.30 L858.47 14.19 L858.67 15.19 Z" fill="none" stroke="#111" stroke-width="1.1" stroke-linejoin="round"/><circle cx="853" cy="15.8" r="2.5" fill="none" stroke="#111" stroke-width="1.1"/>
<path d="M870.0 14.0 L875.0 14.0 L872.5 17.5 Z" fill="#222"/>
<circle cx="1445" cy="15.8" r="9.8" fill="#72d35c"/><circle cx="1445" cy="15.8" r="9.3" fill="none" stroke="#8ee07a" stroke-width="1"/><circle cx="1441.3" cy="12.3" r="1.5" fill="#2f7a2a"/><circle cx="1448.7" cy="12.3" r="1.5" fill="#2f7a2a"/><path d="M1439 16.3 L1451 16.3 C1450.5 20.5 1448 22 1445 22 C1442 22 1439.5 20.5 1439 16.3 Z" fill="#3b8a35"/>
<rect x="1577.5" y="7.5" width="14" height="14" fill="#1a1a1a" stroke="#000"/><rect x="1578.5" y="8.5" width="12" height="12" fill="none" stroke="#bbb" stroke-width="0.6"/><path d="M1580.5 10.5 L1585.5 14.5 L1580.5 18.5" fill="none" stroke="#fff" stroke-width="1.5"/><path d="M1585.5 18.6 L1589 18.6" stroke="#fff" stroke-width="1.2"/>
<circle cx="1750.5" cy="13" r="5.6" fill="#eef4fb" stroke="#7fa8d0" stroke-width="1.6"/><path d="M1746.5 17.5 L1742.5 22" stroke="#5f93c4" stroke-width="2.4" stroke-linecap="round"/>
<path d="M1764.0 14.5 L1769.0 14.5 L1766.5 18.0 Z" fill="#222"/>
<circle cx="1790" cy="11" r="3.6" fill="#c9c9c9" stroke="#a8a8a8" stroke-width="0.8"/><path d="M1784.3 23.5 L1784.3 19 C1784.3 15.5 1787 14.8 1790 14.8 C1793 14.8 1795.7 15.5 1795.7 19 L1795.7 23.5 Z" fill="#d4d4d4" stroke="#a8a8a8" stroke-width="0.8"/>
<text x="1809.3" y="22" font-size="17" font-weight="bold" fill="#222">?</text>
<path d="M1832.0 14.0 L1837.0 14.0 L1834.5 17.5 Z" fill="#222"/>
<rect x="1850" y="19" width="10" height="3" fill="#333"/>
<g fill="none" stroke="#333" stroke-width="1.2"><path d="M1877.5 13.5 L1877.5 10.5 L1886.5 10.5 L1886.5 17 L1883.5 17"/><rect x="1874.5" y="13.5" width="9" height="6.5"/></g>
<path d="M1902 10.5 L1912 20.5 M1912 10.5 L1902 20.5" stroke="#333" stroke-width="1.6"/>
<g fill="none" stroke="#c4c4c4" stroke-width="1" stroke-linejoin="round"><rect x="26.5" y="49.5" width="13" height="2.5" fill="#d8d8d8"/><path d="M29.5 52 L29.5 58 L31.5 60 L34.5 60 L36.5 58 L36.5 52 Z" fill="#e0e0e0"/><path d="M33 60 L33 63"/><rect x="23.5" y="64.5" width="19" height="3.5" fill="#d8d8d8"/><path d="M38 53 C41 55 41 59 38 61" stroke-width="0.7"/></g>
<g fill="none" stroke="#c4c4c4" stroke-width="1" stroke-linejoin="round"><path d="M72 52 L72 44 M69.5 45 L72 41 L74.5 45 Z M72 52 L80 52 M79.5 49.5 L84 52 L79.5 54.5 Z M72 52 L67 57 M65.5 55 L65.5 59 L69.5 59 Z" fill="#d5d5d5" stroke-width="1.6"/></g>
<g fill="none" stroke="#c4c4c4" stroke-width="1" stroke-linejoin="round"><path d="M75 67 L84 71.5 L84 80 L75 85 L66 80 L66 71.5 Z" fill="#e0e0e0"/><path d="M68.5 74.5 L75 71 L81.5 74.5 L81.5 80 L75 83 L68.5 80 Z M68.5 74.5 L75 78 L81.5 74.5" stroke-width="0.9"/></g>
<g fill="none" stroke="#c4c4c4" stroke-width="1" stroke-linejoin="round"><path d="M74.5 92 L74.5 103" stroke-width="2"/><path d="M70 101 L79 101 L76.5 105 L72.5 105 Z" fill="#e0e0e0"/><ellipse cx="74.5" cy="109" rx="6" ry="2.2" fill="#e6e6e6"/></g>
<path d="M201.0 100.0 L206.0 100.0 L203.5 103.5 Z" fill="#8a8a8a"/>
<g fill="none" stroke="#c4c4c4" stroke-width="1" stroke-linejoin="round"><path d="M239.5 49.5 L252 49.5 L258.5 54 L258.5 68 L246 68 L239.5 63.5 Z" fill="#ececec"/><path d="M239.5 49.5 L246 54 L258.5 54 M246 54 L246 68" /><rect x="242" y="51.5" width="9" height="9" fill="#d8d8d8" stroke="none"/></g>
<g fill="none" stroke="#c4c4c4" stroke-width="1" stroke-linejoin="round"><rect x="306.5" y="50.5" width="14" height="17" fill="#ececec"/><path d="M309 54 L316 54 M309 57 L316 57 M309 60 L316 60 M309 63 L316 63" stroke-width="0.8"/><path d="M319.5 50.5 L319.5 64 L323 64" stroke-width="1.6"/></g>
<g fill="none" stroke="#c4c4c4" stroke-width="1" stroke-linejoin="round"><rect x="366.5" y="50.5" width="4.5" height="14" rx="1" fill="#e8e8e8"/><path d="M369 67 L383 67 M371 66 L374 60 M375 66 L378 60 M379 66 L382 60 M373.5 59.5 L383.5 59.5" stroke-width="0.9"/></g>
<g fill="none" stroke="#c4c4c4" stroke-width="1" stroke-linejoin="round"><path d="M432 50 L441 55 L441 62.5 L432 68 L423 62.5 L423 55 Z" fill="#ececec"/><path d="M428.5 51 L434.5 51 L434.5 56 L438 58 L438 61.5 L432 63.5 L428.5 61 Z" fill="#dcdcdc" stroke-width="0.9"/></g>
<g fill="none" stroke="#c4c4c4" stroke-width="2" stroke-linejoin="round"><path d="M463 42.5 L480.5 42.5 M463 46.5 L481 46.5 M463 50.5 L481 50.5 M463 54.5 L480.5 54.5 M463 58 L481 58" stroke-width="2.2" stroke="#d0d0d0"/></g>
<g fill="none" stroke="#c4c4c4" stroke-width="1" stroke-linejoin="round"><rect x="462.5" y="66.5" width="19" height="19" fill="#ececec"/><rect x="464.5" y="69.5" width="15" height="12" fill="#e0e0e0" stroke-width="0.7"/></g>
<text x="465.3" y="79.5" font-size="7.5" font-weight="bold" fill="#c8c8c8">CL</text>
<path d="M466 97 C464 98 463.5 100.5 465 102.3 C466.5 104 469 103.8 470.3 102.5 L479.5 109" fill="none" stroke="#000" stroke-width="2.4" stroke-linecap="round"/><path d="M468.5 95.5 L470.5 98.5" stroke="#000" stroke-width="1.6"/>
<g fill="none" stroke="#c4c4c4" stroke-width="1" stroke-linejoin="round"><rect x="610.5" y="49.5" width="19" height="19" fill="#efefef"/><rect x="613" y="52.5" width="14" height="13" fill="#e4e4e4" stroke-width="0.8"/></g>
<text x="614.3" y="62.5" font-size="7.5" font-weight="bold" fill="#c8c8c8">G1</text>
<g fill="none" stroke="#c4c4c4" stroke-width="1" stroke-linejoin="round"><path d="M678 53.5 L688 53.5 M678 59.5 L688 59.5 M678 65.5 L688 65.5" stroke-width="1"/></g>
<text x="672" y="56" font-size="5.5" fill="#c4c4c4">1</text><text x="672" y="62" font-size="5.5" fill="#c4c4c4">2</text><text x="672" y="68" font-size="5.5" fill="#c4c4c4">3</text>
<g fill="none" stroke="#c4c4c4" stroke-width="1" stroke-linejoin="round"><path d="M742 43 L750.5 46.5 L750.5 56.5 L742 60.5 L733.5 56.5 L733.5 46.5 Z" fill="#efefef"/><path d="M733.5 46.5 L742 50 L750.5 46.5 M742 50 L742 60.5"/><path d="M743.5 51.5 L749 49 L749 55.5 L743.5 58 Z" fill="#d4d4d4" stroke="none"/></g>
<path d="M739.5 103.0 L744.5 103.0 L742 106.5 Z" fill="#8a8a8a"/>
<g fill="none" stroke="#c4c4c4" stroke-width="1" stroke-linejoin="round"><path d="M792.5 56 L792.5 67.5 L809.5 67.5 L809.5 56 L807 56 L807 63.5 L795 63.5 L795 56 Z" fill="#e6e6e6"/><path d="M798.5 49 L798.5 57 C798.5 59.5 803.5 59.5 803.5 57 L803.5 49" /><path d="M799 61 L807 61" stroke-width="0.7"/></g>
<g fill="none" stroke="#c4c4c4" stroke-width="1" stroke-linejoin="round"><path d="M859.5 49.5 L865.5 49.5 L865.5 60 L869 64 L872.5 60 L872.5 49.5 L878.5 49.5 L878.5 68 L859.5 68 Z" fill="#e2e2e2"/><path d="M869 50 L869 53 M869 55 L869 58" stroke-width="1.2"/></g>
<g fill="none" stroke="#c4c4c4" stroke-width="1" stroke-linejoin="round"><path d="M928.5 50.5 L932 50.5 C932 58 936 62 946 62 L946 67.5 L928.5 67.5 Z" fill="#e2e2e2"/><path d="M935 52 L945.5 52 M935.5 54.5 L945.5 54.5 M936.5 57 L945.5 57 M938.5 59.5 L945.5 59.5" stroke-width="0.8"/></g>
<g fill="none" stroke="#c4c4c4" stroke-width="1" stroke-linejoin="round"><path d="M996 43 L999.5 43 L1002 47 L1014.5 47 L1014.5 56 L1002 56 L999.5 60 L996 60 Z" fill="#e0e0e0"/><path d="M1002 47 L1002 56 M1006 47 L1006 56 M1010 47 L1010 56" stroke-width="1.4"/></g>
<path d="M1002.0 103.0 L1007.0 103.0 L1004.5 106.5 Z" fill="#8a8a8a"/>
<g fill="none" stroke="#c4c4c4" stroke-width="1" stroke-linejoin="round"><circle cx="1062.5" cy="51.5" r="2" /><circle cx="1066.5" cy="57" r="2"/><circle cx="1066.5" cy="63" r="2"/><path d="M1062.5 53.5 L1062.5 67 L1069 67"/><rect x="1070.500" y="59.5" width="9" height="8" fill="#d8d8d8"/><path d="M1072.500 65 L1077.500 65" stroke="#f4f4f4"/></g>
<g fill="none" stroke="#d2d2d2" stroke-width="1" stroke-linejoin="round"><circle cx="1129" cy="57" r="4" fill="#e4e4e4"/><circle cx="1137" cy="52.500" r="3.5" fill="#e4e4e4"/><circle cx="1138" cy="62.500" r="5" fill="#e8e8e8"/><circle cx="1138" cy="62.500" r="2" /></g>
<rect x="1192" y="50.500" width="5.500" height="11" rx="1.2" fill="#2f7fb5" stroke="#1c4e70" stroke-width="0.8"/><rect x="1192" y="56.500" width="5.500" height="4" fill="#e0b040"/><rect x="1192.500" y="49.800" width="4.500" height="2" rx="1" fill="#9fd0ee"/><path d="M1195 62 L1195 64.500 M1198 64 C1199.500 58 1201.500 55 1203 56.500 C1204.500 58 1202 62 1203 64 C1204.500 60 1206.500 55.500 1208.200 56.500 C1210 58 1207.500 62 1208.500 64.500" fill="none" stroke="#333" stroke-width="1.5"/><rect x="1199" y="53" width="11.500" height="12" fill="#9a9a9a" opacity="0.35"/><path d="M1192 66.500 L1210 66.500" stroke="#555" stroke-width="1.3"/><rect x="1199" y="65" width="3" height="3" fill="#fff" stroke="#555" stroke-width="0.6"/><path d="M1192 65 L1192 68 M1210 65 L1210 68" stroke="#555" stroke-width="1"/>
<g stroke="#1f4e79" stroke-width="1"><rect x="1239.500" y="48.500" width="13" height="11" fill="#fff"/><rect x="1239.500" y="48.500" width="13" height="3" fill="#4f96c8"/><rect x="1242.500" y="40.500" width="13" height="11" fill="#fff"/><rect x="1242.500" y="40.500" width="13" height="3" fill="#4f96c8"/><rect x="1245.500" y="44.500" width="13" height="11" fill="#fff"/><rect x="1245.500" y="44.500" width="13" height="3.200" fill="#5aa6d8"/></g><path d="M1247.500 50 L1251 50 M1253 50 L1256.500 50 M1247.500 52.500 L1251 52.500 M1253 52.500 L1256.500 52.500 M1241.500 55.500 L1244 55.500 M1241.500 57.500 L1249 57.500" stroke="#444" stroke-width="0.9"/>
<rect x="1240.500" y="68.500" width="17" height="15" fill="#fff" stroke="#1f4e79" stroke-width="1"/><rect x="1241" y="69" width="16" height="4.500" fill="#6fb4e0"/><rect x="1241" y="69" width="16" height="2" fill="#9fd0f0"/><path d="M1242.500 76.500 L1249 76.500 M1242.500 78.500 L1255 78.500 M1242.500 80.800 L1255 80.800" stroke="#777" stroke-width="0.9"/>
<g fill="none" stroke="#c4c4c4" stroke-width="1" stroke-linejoin="round"><rect x="1241.500" y="93.500" width="15" height="17" fill="#efefef"/><path d="M1241.500 97.500 L1256.500 97.500 M1241 106 L1245 104 L1248 106 L1252 103.500 L1257 106" stroke-width="0.9"/></g>
<g fill="none" stroke="#c4c4c4" stroke-width="1" stroke-linejoin="round"><rect x="1391.500" y="42.500" width="9" height="15.500" rx="1.5" fill="#e2e2e2"/><path d="M1398 50 L1407 42 L1409 44 L1400 52.500 Z" fill="#ececec"/><rect x="1400.500" y="49.500" width="6" height="5" fill="#e6e6e6"/><circle cx="1396" cy="54" r="1.500"/></g>
<g fill="none" stroke="#c4c4c4" stroke-width="1" stroke-linejoin="round"><rect x="1568.500" y="41.5" width="12" height="17" fill="#e6e6e6"/><path d="M1568.500 45 L1580.500 45 M1572.500 42 L1572.500 58 M1576.500 42 L1576.500 58" stroke-width="0.9"/><path d="M1563 44 L1567 41 L1567 47 Z" fill="#e0e0e0" stroke-width="0.7"/></g>
<g fill="none" stroke="#c4c4c4" stroke-width="1" stroke-linejoin="round"><rect x="1568.500" y="67.5" width="12" height="17" fill="#e6e6e6"/><path d="M1568.500 71 L1580.500 71 M1572.500 68 L1572.500 84 M1576.500 68 L1576.500 84" stroke-width="0.9"/><path d="M1563 70 L1567 67 L1567 73 Z" fill="#e0e0e0" stroke-width="0.7"/></g>
<text x="1566" y="109.500" font-size="24" font-weight="bold" fill="#dcdcdc" stroke="#c6c6c6" stroke-width="0.5">e</text><path d="M1562 97.500 L1566 97.500 M1561 101 L1565.500 101 M1562 104.500 L1566 104.500" stroke="#c8c8c8" stroke-width="1"/>
<g fill="none" stroke="#c4c4c4" stroke-width="1" stroke-linejoin="round"><path d="M1740 52 L1754 65 M1754 52 L1740 65" stroke-width="3.400" stroke="#d6d6d6" stroke-linecap="round"/><circle cx="1741" cy="52.500" r="2.500" fill="#e0e0e0"/><circle cx="1754" cy="64.500" r="2.500" fill="#e0e0e0"/><circle cx="1753.500" cy="52.500" r="2.200" fill="#e0e0e0"/><circle cx="1741" cy="64.500" r="2.200" fill="#e0e0e0"/></g>
<defs><radialGradient id="gHelp" cx="0.4" cy="0.3" r="0.8"><stop offset="0" stop-color="#9fd4ea"/><stop offset="0.6" stop-color="#4f9fc4"/><stop offset="1" stop-color="#2a7196"/></radialGradient></defs><path d="M1798 63.500 L1795.500 67.500 L1801.500 65.800 Z" fill="#2a6a8c"/><ellipse cx="1805.500" cy="58.500" rx="8.300" ry="7.800" fill="url(#gHelp)" stroke="#1d5676" stroke-width="0.8"/>
<text x="1801.300" y="63.800" font-size="14.5" font-weight="bold" fill="#0a0a0a">?</text>
<path d="M1848 52 L1850 52.500 L1853.500 62.500 L1862.500 62.500" fill="none" stroke="#000" stroke-width="1.5"/><path d="M1853 60 L1862.500 60" stroke="#000" stroke-width="0.9"/><circle cx="1854.500" cy="65.500" r="1.900" fill="#000"/><circle cx="1860.500" cy="65.500" r="1.900" fill="#000"/>
<text x="1852.500" y="59" font-size="7.8" font-weight="bold" fill="#000" letter-spacing="-0.3">G1</text>
<text x="1908.500" y="78" font-size="14" fill="#555">»</text>
<path d="M9.300 151.500 L13.200 155 L9.300 158.500 Z" fill="#222"/>
<g stroke="#7a5c00" stroke-width="0.8" stroke-linejoin="round"><path d="M27.500 151 L32 147 L38 148.500 L38 153.500 L43.500 155 L43.500 160.500 L37.500 164 L27.500 156.500 Z" fill="#eec22a"/><path d="M32 147 L38 148.500 L33.500 151.500 L27.500 151 Z" fill="#fbe27a"/><path d="M38 153.500 L43.500 155 L38.500 158.500 L33.500 156.500 Z" fill="#fbe27a"/><path d="M33.500 151.500 L33.500 156.500 M38.500 158.500 L37.500 164 M33.500 151.500 L38 148.500 M33.500 156.500 L27.500 151" fill="none"/></g>
<defs><radialGradient id="gSph" cx="0.35" cy="0.35" r="0.8"><stop offset="0" stop-color="#ffffff"/><stop offset="0.6" stop-color="#d0d4d8"/><stop offset="1" stop-color="#8e959c"/></radialGradient></defs>
<circle cx="754" cy="133.500" r="7.800" fill="url(#gSph)" stroke="#8a9096" stroke-width="0.8"/><path d="M754 125.500 C760 124.500 764 128.500 763 134" fill="none" stroke="#5a9ec8" stroke-width="2"/><path d="M758 136 L763.500 136 M758 140 L763.500 140 M760 134.500 L757.500 136 L760 137.500 M760 138.500 L757.500 140 L760 141.500" fill="none" stroke="#3f8fc0" stroke-width="1.2"/>
<path d="M772.0 132.0 L777.0 132.0 L774.5 135.5 Z" fill="#9a9a9a"/>
<path d="M786 128.500 L800 128.500 L795 134 L795 141.500 L791 141.500 L791 134 Z" fill="#e9a6e6" stroke="#b45ab0" stroke-width="0.9"/><path d="M797.500 125 L797.500 135.500 L800 133.200 L801.800 136.800 L803 136.200 L801.300 132.800 L804.500 132.500 Z" fill="#fff" stroke="#444" stroke-width="0.8"/>
<path d="M812.0 132.0 L817.0 132.0 L814.5 135.5 Z" fill="#9a9a9a"/>
<path d="M831 137.500 L827.500 141.200" stroke="#4f96c8" stroke-width="2.800" stroke-linecap="round"/><circle cx="837.500" cy="130.500" r="5.800" fill="#eef1f4" stroke="#888" stroke-width="1.3"/><path d="M837.500 126.500 L837.500 128 M837.500 133 L837.500 134.500 M833.500 130.500 L835 130.500 M840 130.500 L841.500 130.500" stroke="#555" stroke-width="1.2"/>
<rect x="857.500" y="124.500" width="12" height="12" fill="none" stroke="#333" stroke-width="0.9" stroke-dasharray="2 1.5"/><path d="M856 137.500 L852.500 141.200" stroke="#4f96c8" stroke-width="2.800" stroke-linecap="round"/><circle cx="861" cy="132" r="5.800" fill="#f1f3f5" stroke="#999" stroke-width="1.2"/>
<path d="M879.500 134 L887 128 L891.500 126 L893 129 L889 131 L884 138 L881 140 Z" fill="#d8d8d8" stroke="#999" stroke-width="0.6"/><path d="M886.500 137.500 L891 134.500 L891 136.300 L896 136.300 L896 139 L891 139 L891 140.800 Z" fill="#3f86b8"/>
<path d="M906 129 L913 126.500 L919 128 L919 137 L912.500 139.500 L906 137.500 Z" fill="#3c3c3c" stroke="#484848" stroke-width="0.7"/><path d="M912.500 130.500 L912.500 139" stroke="#4c4c4c"/>
<path d="M930 131 L940 124.500 L944 127.500 L935 137 Z" fill="#e8862a"/><path d="M934 130.500 L941 126 L938.500 129.500 L942 129 L935 134.500 L937 131 Z" fill="#ffe05a"/><path d="M929 133 L936 138 L934 142 L929.500 139.500 Z" fill="#c8c8c8"/><path d="M939.500 142.500 L943.500 132.500 L945.500 132.500 L949.500 142.500 M941 139.500 L948 139.500" fill="none" stroke="#4a9ac8" stroke-width="1.7"/>
<path d="M956.500 127 L962 123.500 L975 123.500 L975 137 L969.500 142 L956.500 142 Z" fill="#4a4a4a" stroke="#9a9a9a" stroke-width="0.9"/><rect x="957" y="128.500" width="12" height="13" fill="#3f8db8" stroke="#2a6a8c" stroke-width="0.8"/><path d="M964 125.500 L968 125.500 M971 127 L974 124.500 M972 133 L974 133 M970 138.500 L973.500 135.500" stroke="#ddd" stroke-width="0.8"/>
<path d="M982.0 132.0 L987.0 132.0 L984.5 135.5 Z" fill="#5a5a5a"/>
<path d="M998.500 127.500 L1006 124 L1013 126 L1013 138.500 L1005 142 L998.500 139.500 Z" fill="#4a9ac8"/><path d="M1006 128.500 L1013 126 L1013 138.500 L1006 141.500 Z" fill="#e4e4e4"/><path d="M998.500 127.500 L1003 129 L1003 141 L998.500 139.500 Z" fill="#2f7aa8"/><path d="M1003 129 L1006 128.500 L1006 141.500 L1003 141 Z" fill="#8fc8e8"/>
<path d="M1022.0 132.0 L1027.0 132.0 L1024.5 135.5 Z" fill="#5a5a5a"/>
<path d="M1037 133 C1040 127.500 1050 127.500 1054 133 C1050 138.500 1040 138.500 1037 133 Z" fill="#f0f0f0" stroke="#888" stroke-width="0.8"/><ellipse cx="1045.200" cy="132.500" rx="2.600" ry="4" fill="#111"/><path d="M1045.500 136 L1045.500 143" stroke="#111" stroke-width="0.8"/>
<path d="M1062.0 132.0 L1067.0 132.0 L1064.5 135.5 Z" fill="#5a5a5a"/>
<circle cx="1081" cy="128" r="3.500" fill="#444"/><circle cx="1090" cy="132" r="3.500" fill="#424242"/><circle cx="1085" cy="138" r="3.500" fill="#404040"/>
<path d="M1108.500 125 L1112.500 131 L1118.500 140 L1102 140 L1105.500 133 Z" fill="#464646"/><circle cx="1106" cy="141" r="2" fill="#505050"/><circle cx="1114.500" cy="141" r="2" fill="#505050"/>
<path d="M1128.0 132.0 L1133.0 132.0 L1130.5 135.5 Z" fill="#5a5a5a"/>
<defs><linearGradient id="gMon" x1="0" y1="0" x2="1" y2="1"><stop offset="0" stop-color="#a0a0a0"/><stop offset="1" stop-color="#c8c8c8"/></linearGradient></defs>
<rect x="1143" y="126" width="16" height="10.500" fill="url(#gMon)"/><path d="M1147 139.500 L1156 139.500 M1151.500 136.500 L1151.500 139" stroke="#b0b0b0" stroke-width="1.5"/><path d="M1148 141.200 L1156.500 141.200" stroke="#8a8a8a" stroke-width="1"/>
<path d="M1168.5 132.0 L1173.5 132.0 L1171 135.5 Z" fill="#5a5a5a"/>
<g fill="none" stroke="#b4b4b4" stroke-width="1.1"><rect x="1791.500" y="126.500" width="11" height="13"/><rect x="1817.500" y="126.500" width="11" height="13"/><path d="M1871.500 130.500 L1871.500 127.500 L1880.500 127.500 L1880.500 134 L1877.500 134"/><rect x="1868.500" y="130.500" width="9" height="7"/><path d="M1896.500 128.500 L1905.500 138 M1905.500 128.500 L1896.500 138" stroke-width="1.3"/></g>
<path d="M1797 130.500 L1797 136.500 L1793.500 133.500 Z" fill="#a0a0a0"/><path d="M1824 130.500 L1824 136.500 L1827.500 133.500 Z" fill="#a0a0a0"/><rect x="1844" y="136" width="9" height="2.800" fill="#adadad"/>
<rect x="1919" y="118" width="1" height="24" fill="#333"/>
<path d="M1841.500 176.500 L1854 190.500 L1878.500 166" fill="none" stroke="#d3e7cd" stroke-width="10" stroke-linejoin="miter"/>
<rect x="1895.500" y="264.500" width="24.500" height="23.500" fill="#f8f8f8"/>
<path d="M1898.500 181 L1907 173 L1915.500 181" fill="none" stroke="#1f5f8a" stroke-width="2"/><path d="M1900.500 180.500 L1900.500 189 L1913.500 189 L1913.500 180.500 L1907 174.800 Z" fill="#fff" stroke="#333" stroke-width="0.9"/><rect x="1905" y="183.500" width="4" height="5.500" fill="#fff" stroke="#333" stroke-width="0.9"/>
<g fill="#f4f4f4" stroke="#333" stroke-width="0.9" stroke-linejoin="round"><path d="M1900.500 200 L1903.500 198 L1903.500 211 L1900.500 209 Z"/><path d="M1903.500 198 L1907.500 196.500 L1910.500 198.500 L1910.500 211.500 L1906.500 213 L1903.500 211 Z"/><path d="M1906.500 200 L1910.500 198.500 M1906.500 200 L1906.500 213"/><path d="M1910.500 198.500 L1913.500 199.500 L1913.500 209.500 L1910.500 211.500"/><path d="M1905 197.500 L1908.500 196 L1911.500 197.500 M1908.500 196 L1912.500 195.500 L1913.500 199.500"/></g>
<path d="M1897.500 222.500 L1902.500 221.500 L1904 223.500 L1912.500 223.500 L1912.500 226.500 L1916.500 226.500 L1913 236.500 L1897.500 236.500 Z" fill="#e0e0e0" stroke="#444" stroke-width="0.9" stroke-linejoin="round"/><path d="M1900.500 227 L1916.500 226.500 L1913 236.500 L1897.500 236.500 Z" fill="#fafafa" stroke="#444" stroke-width="0.9" stroke-linejoin="round"/>
<rect x="1899" y="245.500" width="16" height="14.500" rx="1" fill="#fff" stroke="#333" stroke-width="0.9"/><rect x="1901" y="247.500" width="7" height="2.500" fill="#f0c020" stroke="#8a6a00" stroke-width="0.5"/><rect x="1910" y="247.500" width="3" height="2.500" fill="#f0c020" stroke="#8a6a00" stroke-width="0.5"/><path d="M1903.500 252 L1906 252 L1906 255 L1908.500 255 L1908.500 257.800 L1901 257.800 L1901 255 L1903.500 255 Z" fill="#f0c020" stroke="#8a6a00" stroke-width="0.5"/><rect x="1910.500" y="253" width="2.500" height="5" fill="#ddd" stroke="#555" stroke-width="0.5"/>
<defs><clipPath id="cBall"><circle cx="1907" cy="276.500" r="8"/></clipPath></defs><g clip-path="url(#cBall)"><rect x="1899" y="268" width="8.500" height="9" fill="#3b78d8"/><rect x="1907" y="268" width="9" height="9.500" fill="#e03a2a"/><rect x="1899" y="276.500" width="8.500" height="9" fill="#4aae3a"/><rect x="1907" y="277" width="9" height="9" fill="#f0c828"/><path d="M1899 277 C1903 274.500 1905.500 273 1907.500 268 C1909.500 273.500 1912 276 1916 277.500" fill="none" stroke="#fff" stroke-width="1" opacity="0.7"/></g><circle cx="1907" cy="276.500" r="8" fill="none" stroke="#666" stroke-width="0.7"/><ellipse cx="1904.500" cy="272.500" rx="3" ry="2" fill="#fff" opacity="0.45"/>
<rect x="1898.500" y="292.500" width="17" height="16" fill="#fff" stroke="#1f4e79" stroke-width="1"/><rect x="1899" y="293" width="16" height="2.800" fill="#3f8cc4"/><g stroke="#1f4e79" stroke-width="0.8" fill="#4f96c8"><rect x="1900.500" y="297.500" width="3.500" height="2"/><rect x="1900.500" y="301" width="3.500" height="2"/><rect x="1900.500" y="304.500" width="3.500" height="2"/></g><path d="M1906 298.500 L1913.500 298.500 M1906 302 L1913.500 302 M1906 305.500 L1913.500 305.500" stroke="#333" stroke-width="0.9"/>
<path d="M39.500 948 L39.500 934" stroke="#1c1cb0" stroke-width="4"/><path d="M34 934 L38.800 926 L43.500 934 Z" fill="#2020c8"/><path d="M40 947 L49 937.500" stroke="#1a661a" stroke-width="4"/><path d="M45 935.500 L54.500 929 L52.500 940.500 Z" fill="#1a6a1a"/><path d="M39.500 948 L57 955.500" stroke="#c81e1e" stroke-width="3.600"/><path d="M58.500 951 L65 957.500 L55.500 959 Z" fill="#d83232"/>
<text x="34.300" y="926" font-size="10.500" fill="#1a1af0">Z</text><text x="52" y="930.500" font-size="10.500" fill="#1a8a1a">Y</text><text x="64.500" y="963.500" font-size="10.500" fill="#f01a1a">X</text>
<path d="M11.5 1010 L11.5 1018 L7 1014 Z" fill="#a2a2a2"/>
<rect x="5" y="1010" width="1.500" height="8" fill="#a2a2a2"/>
<path d="M27.5 1010 L27.5 1018 L23 1014 Z" fill="#a2a2a2"/>
<path d="M38.5 1010 L38.5 1018 L43 1014 Z" fill="#a2a2a2"/>
<path d="M54.5 1010 L54.5 1018 L59 1014 Z" fill="#a2a2a2"/>
<rect x="59.5" y="1010" width="1.500" height="8" fill="#a2a2a2"/>
<path d="M1829.0 1032.8 L1834.0 1032.8 L1831.5 1030.3 Z" fill="#8a8a8a"/>
<g fill="#f4f4f4" stroke="#333" stroke-width="0.9" stroke-linejoin="round"><path d="M1901.500 1029 L1906.500 1025.500 L1916.500 1030 L1916.500 1033.500 L1911 1038 L1901.500 1033 Z"/><path d="M1901.500 1029 L1911 1034 L1916.500 1030 M1911 1034 L1911 1038"/><circle cx="1906.500" cy="1028.500" r="1.600"/><path d="M1909.500 1032 L1913 1029.500" stroke-width="1.2"/></g>
</svg>
</div>
</body></html>
